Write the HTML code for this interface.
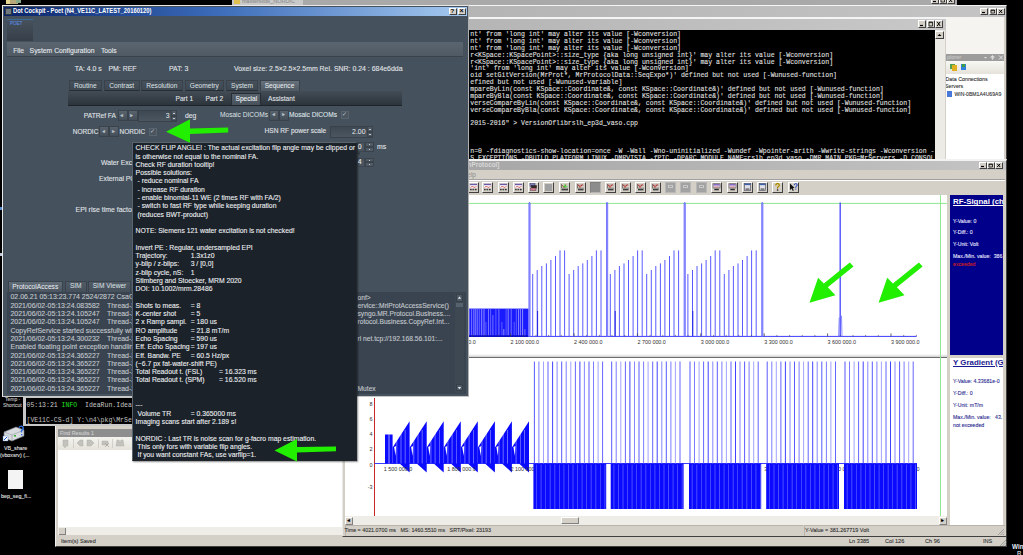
<!DOCTYPE html><html><head><meta charset="utf-8"><style>
*{box-sizing:border-box}
.t{-webkit-text-stroke:0.1px currentColor}
html,body{margin:0;padding:0}
body{width:1023px;height:555px;background:#000;position:relative;overflow:hidden;font-family:"Liberation Sans",sans-serif}
div{position:absolute;white-space:pre}
svg{position:absolute}
</style></head><body><div style="left:6px;top:0px;width:4px;height:4px;background:#e8d890"></div>
<div style="left:10px;top:0px;width:8px;height:4px;background:#b8a878"></div>
<div style="left:16px;top:0px;width:5px;height:3px;background:#88a888"></div>
<div style="left:232px;top:0px;width:725px;height:5px;background:#a9a9a9"></div>
<div style="left:232px;top:0px;width:71px;height:5px;background:#c9c9c9"></div>
<div style="left:234px;top:0px;width:6px;height:4px;background:#e0c050"></div>
<div class="t" style="left:242px;top:-1.80px;font-size:5.5px;line-height:6.60px;color:#909090;font-weight:400;">masterslide_NORDIC</div>
<div style="left:931px;top:-3px;width:8px;height:7px;background:#d4d0c8;border-right:1px solid #404040;border-bottom:1px solid #404040;border-top:1px solid #fff;border-left:1px solid #fff"></div>
<svg style="left:931px;top:-3px" width="8" height="7" viewBox="0 0 8 7"><path d="M2 4.5 L5 4.5" fill="none" stroke="#000" stroke-width="1.2"/></svg>
<div style="left:939px;top:-3px;width:8px;height:7px;background:#d4d0c8;border-right:1px solid #404040;border-bottom:1px solid #404040;border-top:1px solid #fff;border-left:1px solid #fff"></div>
<svg style="left:939px;top:-3px" width="8" height="7" viewBox="0 0 8 7"><path d="M2 2 L5.5 2 L5.5 5 L2 5 Z M2 2.6 L5.5 2.6" fill="none" stroke="#000" stroke-width="0.7"/></svg>
<div style="left:947px;top:-3px;width:8px;height:7px;background:#d4d0c8;border-right:1px solid #404040;border-bottom:1px solid #404040;border-top:1px solid #fff;border-left:1px solid #fff"></div>
<svg style="left:947px;top:-3px" width="8" height="7" viewBox="0 0 8 7"><path d="M2.2 1.8 L5.2 5 M5.2 1.8 L2.2 5" fill="none" stroke="#000" stroke-width="1.0"/></svg>
<div style="left:55px;top:4.5px;width:952px;height:542.5px;background:#d4d0c8;border-top:1.5px solid #f4f4f4;border-left:1px solid #f0f0f0;border-right:1px solid #404040;border-bottom:1px solid #404040"></div>
<div style="left:56px;top:6px;width:950px;height:10.5px;background:linear-gradient(90deg,#a8a8a8,#c4c4c4)"></div>
<div style="left:980px;top:8px;width:8px;height:7px;background:#d4d0c8;border-right:1px solid #404040;border-bottom:1px solid #404040;border-top:1px solid #fff;border-left:1px solid #fff"></div>
<svg style="left:980px;top:8px" width="8" height="7" viewBox="0 0 8 7"><path d="M2 4.5 L5 4.5" fill="none" stroke="#000" stroke-width="1.2"/></svg>
<div style="left:989px;top:8px;width:8px;height:7px;background:#d4d0c8;border-right:1px solid #404040;border-bottom:1px solid #404040;border-top:1px solid #fff;border-left:1px solid #fff"></div>
<svg style="left:989px;top:8px" width="8" height="7" viewBox="0 0 8 7"><path d="M2 2 L5.5 2 L5.5 5 L2 5 Z M2 2.6 L5.5 2.6" fill="none" stroke="#000" stroke-width="0.7"/></svg>
<div style="left:997px;top:8px;width:8px;height:7px;background:#d4d0c8;border-right:1px solid #404040;border-bottom:1px solid #404040;border-top:1px solid #fff;border-left:1px solid #fff"></div>
<svg style="left:997px;top:8px" width="8" height="7" viewBox="0 0 8 7"><path d="M2.2 1.8 L5.2 5 M5.2 1.8 L2.2 5" fill="none" stroke="#000" stroke-width="1.0"/></svg>
<div style="left:946px;top:17px;width:58px;height:37px;background:#f5f4f1"></div>
<div style="left:945px;top:17px;width:1px;height:150px;background:#808080"></div>
<div style="left:946px;top:54px;width:58px;height:7px;background:#9c9c9c"></div>
<div class="t" style="left:947px;top:54.20px;font-size:5.5px;line-height:6.60px;color:#c8c8c8;font-weight:400;">plorer</div>
<svg style="left:980px;top:54px" width="26" height="7" viewBox="0 0 26 7"><path d="M4 3 L7 3 L5.5 4.6 Z" fill="#e8e8e8"/><path d="M12.5 1 L12.5 6 M11 2.5 L14 2.5 L14 4 L11 4 Z" stroke="#e8e8e8" stroke-width="0.7" fill="none"/><path d="M19 1.5 L23 5.5 M23 1.5 L19 5.5" stroke="#e8e8e8" stroke-width="0.9"/></svg>
<div style="left:946px;top:61px;width:58px;height:13px;background:linear-gradient(#f8f8f4,#e4e2da)"></div>
<div style="left:950px;top:64px;width:5px;height:5px;background:#50a050"></div>
<div style="left:952px;top:65px;width:5px;height:6px;background:#e0b020"></div>
<div style="left:961px;top:64px;width:5px;height:6px;background:#3080e0"></div>
<div style="left:962px;top:64px;width:3px;height:3px;background:#40a040"></div>
<div style="left:946px;top:74px;width:58px;height:90px;background:#fff"></div>
<div class="t" style="left:945.5px;top:75.52px;font-size:5.3px;line-height:6.36px;color:#303030;font-weight:400;">Data Connections</div>
<div class="t" style="left:945px;top:83.42px;font-size:5.3px;line-height:6.36px;color:#303030;font-weight:400;">Servers</div>
<div style="left:947px;top:91px;width:5px;height:6px;background:#4878d8"></div>
<div class="t" style="left:954.5px;top:91.14px;font-size:5.1px;line-height:6.12px;color:#303030;font-weight:400;">WIN-0BM1A4U69A9</div>
<div style="left:440px;top:16.5px;width:506px;height:150px;background:#d4d0c8;border-top:2px solid #f4f4f4"></div>
<div style="left:440px;top:18.5px;width:506px;height:11px;background:linear-gradient(90deg,#b4b4b4,#c8c8c8)"></div>
<div style="left:918px;top:20px;width:8px;height:8px;background:#d4d0c8;border-right:1px solid #404040;border-bottom:1px solid #404040;border-top:1px solid #fff;border-left:1px solid #fff"></div>
<svg style="left:918px;top:20px" width="8" height="8" viewBox="0 0 8 8"><path d="M2 5.5 L5 5.5" fill="none" stroke="#000" stroke-width="1.2"/></svg>
<div style="left:927px;top:20px;width:8px;height:8px;background:#d4d0c8;border-right:1px solid #404040;border-bottom:1px solid #404040;border-top:1px solid #fff;border-left:1px solid #fff"></div>
<svg style="left:927px;top:20px" width="8" height="8" viewBox="0 0 8 8"><path d="M2 2 L5.5 2 L5.5 6 L2 6 Z M2 2.6 L5.5 2.6" fill="none" stroke="#000" stroke-width="0.7"/></svg>
<div style="left:935px;top:20px;width:8px;height:8px;background:#d4d0c8;border-right:1px solid #404040;border-bottom:1px solid #404040;border-top:1px solid #fff;border-left:1px solid #fff"></div>
<svg style="left:935px;top:20px" width="8" height="8" viewBox="0 0 8 8"><path d="M2.2 1.8 L5.2 6 M5.2 1.8 L2.2 6" fill="none" stroke="#000" stroke-width="1.0"/></svg>
<div style="left:440px;top:30px;width:495px;height:140px;background:#000"></div>
<div style="left:935px;top:30px;width:10px;height:140px;background:#ecebe6"></div>
<div style="left:935px;top:31px;width:9px;height:8px;background:#d4d0c8;border-right:1px solid #404040;border-bottom:1px solid #404040;border-top:1px solid #fff;border-left:1px solid #fff"></div>
<svg style="left:935px;top:31px" width="9" height="8" viewBox="0 0 9 8"><path d="M2.5 5 L4.5 3 L6.5 5 Z" fill="#000"/></svg>
<div style="left:470.3px;top:31.10px;font-size:6.5px;line-height:7.80px;color:#dcdcdc;font-weight:400;font-family:'Liberation Mono';-webkit-text-stroke:0.15px #dcdcdc;">nt' from 'long int' may alter its value [-Wconversion]</div>
<div style="left:470.3px;top:37.97px;font-size:6.5px;line-height:7.80px;color:#dcdcdc;font-weight:400;font-family:'Liberation Mono';-webkit-text-stroke:0.15px #dcdcdc;">nt' from 'long int' may alter its value [-Wconversion]</div>
<div style="left:470.3px;top:44.83px;font-size:6.5px;line-height:7.80px;color:#dcdcdc;font-weight:400;font-family:'Liberation Mono';-webkit-text-stroke:0.15px #dcdcdc;">nt' from 'long int' may alter its value [-Wconversion]</div>
<div style="left:470.3px;top:51.70px;font-size:6.5px;line-height:7.80px;color:#dcdcdc;font-weight:400;font-family:'Liberation Mono';-webkit-text-stroke:0.15px #dcdcdc;">r&lt;KSpace::KSpacePoint&gt;::size_type {aka long unsigned int}' may alter its value [-Wconversion]</div>
<div style="left:470.3px;top:58.57px;font-size:6.5px;line-height:7.80px;color:#dcdcdc;font-weight:400;font-family:'Liberation Mono';-webkit-text-stroke:0.15px #dcdcdc;">r&lt;KSpace::KSpacePoint&gt;::size_type {aka long unsigned int}' may alter its value [-Wconversion]</div>
<div style="left:470.3px;top:65.44px;font-size:6.5px;line-height:7.80px;color:#dcdcdc;font-weight:400;font-family:'Liberation Mono';-webkit-text-stroke:0.15px #dcdcdc;">'int' from 'long int' may alter its value [-Wconversion]</div>
<div style="left:470.3px;top:72.30px;font-size:6.5px;line-height:7.80px;color:#dcdcdc;font-weight:400;font-family:'Liberation Mono';-webkit-text-stroke:0.15px #dcdcdc;">oid setGitVersion(MrProt*, MrProtocolData::SeqExpo*)' defined but not used [-Wunused-function]</div>
<div style="left:470.3px;top:79.17px;font-size:6.5px;line-height:7.80px;color:#dcdcdc;font-weight:400;font-family:'Liberation Mono';-webkit-text-stroke:0.15px #dcdcdc;">efined but not used [-Wunused-variable]</div>
<div style="left:470.3px;top:86.04px;font-size:6.5px;line-height:7.80px;color:#dcdcdc;font-weight:400;font-family:'Liberation Mono';-webkit-text-stroke:0.15px #dcdcdc;">mpareByLin(const KSpace::Coordinate&amp;, const KSpace::Coordinate&amp;)' defined but not used [-Wunused-function]</div>
<div style="left:470.3px;top:92.90px;font-size:6.5px;line-height:7.80px;color:#dcdcdc;font-weight:400;font-family:'Liberation Mono';-webkit-text-stroke:0.15px #dcdcdc;">mpareByBla(const KSpace::Coordinate&amp;, const KSpace::Coordinate&amp;)' defined but not used [-Wunused-function]</div>
<div style="left:470.3px;top:99.77px;font-size:6.5px;line-height:7.80px;color:#dcdcdc;font-weight:400;font-family:'Liberation Mono';-webkit-text-stroke:0.15px #dcdcdc;">verseCompareByLin(const KSpace::Coordinate&amp;, const KSpace::Coordinate&amp;)' defined but not used [-Wunused-function]</div>
<div style="left:470.3px;top:106.64px;font-size:6.5px;line-height:7.80px;color:#dcdcdc;font-weight:400;font-family:'Liberation Mono';-webkit-text-stroke:0.15px #dcdcdc;">verseCompareByBla(const KSpace::Coordinate&amp;, const KSpace::Coordinate&amp;)' defined but not used [-Wunused-function]</div>
<div style="left:470.3px;top:120.37px;font-size:6.5px;line-height:7.80px;color:#dcdcdc;font-weight:400;font-family:'Liberation Mono';-webkit-text-stroke:0.15px #dcdcdc;">2015-2016" &gt; VersionOflibrslh_ep3d_vaso.cpp</div>
<div style="left:470.3px;top:147.84px;font-size:6.5px;line-height:7.80px;color:#dcdcdc;font-weight:400;font-family:'Liberation Mono';-webkit-text-stroke:0.15px #dcdcdc;">n=0 -fdiagnostics-show-location=once -W -Wall -Wno-uninitialized -Wundef -Wpointer-arith -Wwrite-strings -Wconversion -</div>
<div style="left:470.3px;top:154.71px;font-size:6.5px;line-height:7.80px;color:#dcdcdc;font-weight:400;font-family:'Liberation Mono';-webkit-text-stroke:0.15px #dcdcdc;">S_EXCEPTIONS -DBUILD_PLATFORM_LINUX -DMRVISTA -fPIC -DPARC_MODULE_NAME=rslh_ep3d_vaso -DMR_MAIN_PKG=MrServers -D CONSOL</div>
<div style="left:23px;top:397px;width:320px;height:29px;background:#c8c8c8"></div>
<div style="left:26px;top:398px;width:317px;height:26px;background:#000"></div>
<div style="left:26.5px;top:401.6px;font-family:'Liberation Mono';font-size:6.5px;line-height:7.8px;color:#c8c8c8">05:13:21 <span style="color:#20e020">INFO</span>  IdeaRun.IdeaRunner</div>
<div style="left:26.5px;top:416.5px;font-family:'Liberation Mono';font-size:6.5px;line-height:7.8px;color:#c0c0c0">[VE11C-CS-d] Y:\n4\pkg\MrServers</div>
<div class="t" style="left:5px;top:395.50px;font-size:5px;line-height:6.00px;color:#c0c0c0;font-weight:400;">Temp -</div>
<div class="t" style="left:3px;top:402.00px;font-size:5px;line-height:6.00px;color:#c0c0c0;font-weight:400;">Shortcut</div>
<svg style="left:0;top:424" width="30" height="20" viewBox="0 0 30 20"><path d="M4 8 L16 3 L24 6 L24 12 L12 17 L4 14 Z" fill="#d8dce0" stroke="#707880" stroke-width="0.6"/><path d="M4 8 L12 11 L24 6" fill="none" stroke="#90989f" stroke-width="0.6"/><path d="M12 11 L12 17" stroke="#90989f" stroke-width="0.6"/><rect x="14" y="11" width="2" height="1.5" fill="#30b030"/><path d="M19 3.5 Q21 1 23 3 Q24 5 21.5 6.5 L21.5 8.5" fill="none" stroke="#3070e0" stroke-width="1.4"/><rect x="21" y="10" width="1.4" height="1.4" fill="#3070e0"/><rect x="3" y="12" width="5" height="5" fill="#fff" stroke="#5080c0" stroke-width="0.4"/><path d="M4 16 L7 13" stroke="#2060d0" stroke-width="1"/></svg>
<div class="t" style="left:4px;top:444.82px;font-size:5.3px;line-height:6.36px;color:#e0e0e0;font-weight:400;">VB_share</div>
<div class="t" style="left:0px;top:451.82px;font-size:5.3px;line-height:6.36px;color:#e0e0e0;font-weight:400;">(vboxsrv) (...</div>
<div style="left:8px;top:470px;width:15px;height:19px;background:#f4f4f4"></div>
<div class="t" style="left:1px;top:492.82px;font-size:5.3px;line-height:6.36px;color:#e0e0e0;font-weight:400;">bep_seg_fi...</div>
<div style="left:1012px;top:542.72px;font-size:6.3px;line-height:7.56px;color:#e8eef8;font-weight:700;">Wind</div>
<div style="left:1017px;top:550.40px;font-size:6px;line-height:7.20px;color:#c0c8d0;font-weight:700;">R</div>
<div style="left:58px;top:429px;width:300px;height:8px;background:#8e8e8e"></div>
<div class="t" style="left:60px;top:429.82px;font-size:5.3px;line-height:6.36px;color:#cfcfcf;font-weight:400;">Find Results 1</div>
<div style="left:58px;top:437px;width:300px;height:13px;background:linear-gradient(#f4f3ee,#e4e2da)"></div>
<svg style="left:58px;top:437px" width="80" height="13" viewBox="0 0 80 13"><g fill="#c4c2bc" stroke="#aaa8a2" stroke-width="0.4"><path d="M5 3 L10 3 L10 9 L8 9 L7 11 L6 9 L5 9 Z"/><path d="M19 6 L22 3 L25 3 L25 9 L22 9 Z"/><path d="M29 3 L33 3 L36 6 L33 9 L29 9 Z"/><path d="M44 4 L50 4 L50 8 L44 8 Z"/><path d="M58 9 L59 3 L61 3 L62 6 L63 3 L65 3 L66 9 Z"/></g><path d="M15.5 2 L15.5 11 M40.5 2 L40.5 11 M54.5 2 L54.5 11" stroke="#c8c6c0" stroke-width="0.7"/><path d="M47 6 L51 10 M51 6 L47 10" stroke="#a8a6a0" stroke-width="0.8"/></svg>
<div style="left:58px;top:450px;width:290px;height:77px;background:#fff"></div>
<div style="left:58px;top:527px;width:290px;height:8px;background:#eeede8"></div>
<div style="left:59px;top:528px;width:7px;height:7px;background:#d4d0c8;border-right:1px solid #808080;border-bottom:1px solid #808080"></div>
<div class="t" style="left:61px;top:537.64px;font-size:5.6px;line-height:6.72px;color:#303030;font-weight:400;">Item(s) Saved</div>
<div class="t" style="left:849px;top:537.64px;font-size:5.6px;line-height:6.72px;color:#303030;font-weight:400;">Ln 3385</div>
<div class="t" style="left:885px;top:537.64px;font-size:5.6px;line-height:6.72px;color:#303030;font-weight:400;">Col 126</div>
<div class="t" style="left:925px;top:537.64px;font-size:5.6px;line-height:6.72px;color:#303030;font-weight:400;">Ch 96</div>
<div class="t" style="left:983px;top:537.64px;font-size:5.6px;line-height:6.72px;color:#303030;font-weight:400;">INS</div>
<div style="left:342px;top:159px;width:665px;height:378px;background:#d4d0c8;border-top:2px solid #f2f2f2;border-left:1px solid #e8e8e8;border-right:1px solid #404040;border-bottom:1px solid #404040"></div>
<div style="left:344px;top:161px;width:662px;height:8.5px;background:linear-gradient(90deg,#a0a0a0,#c4c4c4)"></div>
<div style="left:300px;top:161px;width:199.5px;height:8.5px;font-size:6.4px;line-height:8.5px;color:#d8d8d8;font-weight:700;text-align:right">SequenceSimulationProtocol]</div>
<div style="left:979px;top:162px;width:8px;height:7px;background:#d4d0c8;border-right:1px solid #404040;border-bottom:1px solid #404040;border-top:1px solid #fff;border-left:1px solid #fff"></div>
<svg style="left:979px;top:162px" width="8" height="7" viewBox="0 0 8 7"><path d="M2 4.5 L5 4.5" fill="none" stroke="#000" stroke-width="1.2"/></svg>
<div style="left:987px;top:162px;width:8px;height:7px;background:#d4d0c8;border-right:1px solid #404040;border-bottom:1px solid #404040;border-top:1px solid #fff;border-left:1px solid #fff"></div>
<svg style="left:987px;top:162px" width="8" height="7" viewBox="0 0 8 7"><path d="M2 2 L5.5 2 L5.5 5 L2 5 Z M2 2.6 L5.5 2.6" fill="none" stroke="#000" stroke-width="0.7"/></svg>
<div style="left:995px;top:162px;width:8px;height:7px;background:#d4d0c8;border-right:1px solid #404040;border-bottom:1px solid #404040;border-top:1px solid #fff;border-left:1px solid #fff"></div>
<svg style="left:995px;top:162px" width="8" height="7" viewBox="0 0 8 7"><path d="M2.2 1.8 L5.2 5 M5.2 1.8 L2.2 5" fill="none" stroke="#000" stroke-width="1.0"/></svg>
<div style="left:300px;top:170px;width:176px;height:9px;font-size:6.5px;line-height:9px;color:#8a8a8a;text-align:right">File  Edit  View  Help</div>
<div style="left:344px;top:179px;width:661px;height:1px;background:#a0a0a0"></div>
<div style="left:344px;top:180px;width:661px;height:1px;background:#fff"></div>
<div style="left:467.7px;top:182px;width:11px;height:11px;background:#d4d0c8;border-right:1px solid #404040;border-bottom:1px solid #404040;border-top:1px solid #fff;border-left:1px solid #fff"></div>
<svg style="left:467.7px;top:182px" width="11" height="11" viewBox="0 0 11 11"><rect x="2" y="1.8" width="7" height="4.4" fill="#f4f0f4"/><rect x="2" y="1.8" width="7" height="1.3" fill="#6a5aa8"/><path d="M2.5 5.5 Q4 3.4 5.5 5 T8.5 4" fill="none" stroke="#d04040" stroke-width="0.7"/><rect x="2.2" y="6.8" width="1.4" height="1.5" fill="#202020"/><rect x="4.4" y="6.8" width="1.6" height="1.5" fill="#404040"/><rect x="6.8" y="6.8" width="1.8" height="1.5" fill="#303030"/></svg>
<div style="left:482.3px;top:182px;width:11px;height:11px;background:#d4d0c8;border-right:1px solid #404040;border-bottom:1px solid #404040;border-top:1px solid #fff;border-left:1px solid #fff"></div>
<svg style="left:482.3px;top:182px" width="11" height="11" viewBox="0 0 11 11"><rect x="2" y="1.8" width="7" height="4.4" fill="#f4f0f4"/><rect x="2" y="1.8" width="7" height="1.3" fill="#6a5aa8"/><path d="M2.5 5.5 Q4 3.4 5.5 5 T8.5 4" fill="none" stroke="#d04040" stroke-width="0.7"/><rect x="2.2" y="6.8" width="1.4" height="1.5" fill="#202020"/><rect x="4.4" y="6.8" width="1.6" height="1.5" fill="#404040"/><rect x="6.8" y="6.8" width="1.8" height="1.5" fill="#303030"/></svg>
<div style="left:497.5px;top:182px;width:11px;height:11px;background:#d4d0c8;border-right:1px solid #404040;border-bottom:1px solid #404040;border-top:1px solid #fff;border-left:1px solid #fff"></div>
<svg style="left:497.5px;top:182px" width="11" height="11" viewBox="0 0 11 11"><rect x="2" y="1.8" width="7" height="4.4" fill="#f4f0f4"/><rect x="2" y="1.8" width="7" height="1.3" fill="#6a5aa8"/><path d="M2.5 5.5 Q4 3.4 5.5 5 T8.5 4" fill="none" stroke="#d04040" stroke-width="0.7"/><rect x="2.2" y="6.8" width="1.4" height="1.5" fill="#202020"/><rect x="4.4" y="6.8" width="1.6" height="1.5" fill="#404040"/><rect x="6.8" y="6.8" width="1.8" height="1.5" fill="#303030"/></svg>
<div style="left:512.8px;top:182px;width:11px;height:11px;background:#d4d0c8;border-right:1px solid #404040;border-bottom:1px solid #404040;border-top:1px solid #fff;border-left:1px solid #fff"></div>
<svg style="left:512.8px;top:182px" width="11" height="11" viewBox="0 0 11 11"><rect x="2" y="1.8" width="7" height="4.4" fill="#f4f0f4"/><rect x="2" y="1.8" width="7" height="1.3" fill="#6a5aa8"/><path d="M2.5 5.5 Q4 3.4 5.5 5 T8.5 4" fill="none" stroke="#d04040" stroke-width="0.7"/><rect x="2.2" y="6.8" width="1.4" height="1.5" fill="#202020"/><rect x="4.4" y="6.8" width="1.6" height="1.5" fill="#404040"/><rect x="6.8" y="6.8" width="1.8" height="1.5" fill="#303030"/></svg>
<div style="left:528.3px;top:182px;width:11px;height:11px;background:#d4d0c8;border-right:1px solid #404040;border-bottom:1px solid #404040;border-top:1px solid #fff;border-left:1px solid #fff"></div>
<svg style="left:528.3px;top:182px" width="11" height="11" viewBox="0 0 11 11"><rect x="2" y="1.5" width="5" height="3" fill="#8080c0" stroke="#303060" stroke-width="0.5"/><rect x="3.5" y="3.5" width="5" height="2.6" fill="#302820" stroke="#202020" stroke-width="0.5"/><rect x="2.5" y="6" width="5.5" height="2.5" fill="#d08090" stroke="#503040" stroke-width="0.5"/></svg>
<div style="left:543.3px;top:182px;width:11px;height:11px;background:#d4d0c8;border-right:1px solid #404040;border-bottom:1px solid #404040;border-top:1px solid #fff;border-left:1px solid #fff"></div>
<div style="left:545.3px;top:184px;width:7px;height:7px;background:#a0a0a0"></div>
<div style="left:559.3px;top:182px;width:11px;height:11px;background:#d4d0c8;border-right:1px solid #404040;border-bottom:1px solid #404040;border-top:1px solid #fff;border-left:1px solid #fff"></div>
<svg style="left:559.3px;top:182px" width="11" height="11" viewBox="0 0 11 11"><path d="M2.5 2 L2.5 6.2 L9 6.2" fill="none" stroke="#202020" stroke-width="0.5"/><path d="M3 3 L5 5.5 L7 2.5" fill="none" stroke="#c02020" stroke-width="0.8"/><path d="M3.5 4.3 L8.5 4.3 M6 2 L6 6" stroke="#20e020" stroke-width="0.7"/><rect x="2.5" y="7" width="6.5" height="1.4" fill="#404040"/></svg>
<div style="left:574.5px;top:182px;width:11px;height:11px;background:#d4d0c8;border-right:1px solid #404040;border-bottom:1px solid #404040;border-top:1px solid #fff;border-left:1px solid #fff"></div>
<svg style="left:574.5px;top:182px" width="11" height="11" viewBox="0 0 11 11"><path d="M2.5 2 L2.5 6.2 L9 6.2" fill="none" stroke="#202020" stroke-width="0.5"/><path d="M3 2.5 L5 5.5 L7.5 2.2" fill="none" stroke="#c02020" stroke-width="0.8"/><path d="M3 3.2 L8.5 3.2" stroke="#902020" stroke-width="0.5"/><rect x="3" y="7" width="5.5" height="1.4" fill="#404040"/></svg>
<div style="left:589.8px;top:182px;width:11px;height:11px;background:#8c8c8c;border:1px solid #b4b4b4;border-top-color:#808080;border-left-color:#808080"></div>
<div style="left:605.0px;top:182px;width:11px;height:11px;background:#d4d0c8;border-right:1px solid #404040;border-bottom:1px solid #404040;border-top:1px solid #fff;border-left:1px solid #fff"></div>
<svg style="left:605.0px;top:182px" width="11" height="11" viewBox="0 0 11 11"><path d="M2.5 2 L2.5 6.2 L9 6.2" fill="none" stroke="#202020" stroke-width="0.5"/><path d="M3 2.5 L5 5.5 L7.5 2.2" fill="none" stroke="#c02020" stroke-width="0.8"/><path d="M3 3.2 L8.5 3.2" stroke="#902020" stroke-width="0.5"/><rect x="3" y="7" width="5.5" height="1.4" fill="#404040"/></svg>
<div style="left:619.8px;top:182px;width:11px;height:11px;background:#d4d0c8;border-right:1px solid #404040;border-bottom:1px solid #404040;border-top:1px solid #fff;border-left:1px solid #fff"></div>
<svg style="left:619.8px;top:182px" width="11" height="11" viewBox="0 0 11 11"><path d="M2.5 2 L2.5 6.2 L9 6.2" fill="none" stroke="#202020" stroke-width="0.5"/><path d="M3 2.5 L5 5.5 L7.5 2.2" fill="none" stroke="#c02020" stroke-width="0.8"/><path d="M3 3.2 L8.5 3.2" stroke="#902020" stroke-width="0.5"/><rect x="3" y="7" width="5.5" height="1.4" fill="#404040"/></svg>
<div style="left:635.1px;top:182px;width:11px;height:11px;background:#d4d0c8;border-right:1px solid #404040;border-bottom:1px solid #404040;border-top:1px solid #fff;border-left:1px solid #fff"></div>
<svg style="left:635.1px;top:182px" width="11" height="11" viewBox="0 0 11 11"><path d="M2.5 2 L2.5 6.2 L9 6.2" fill="none" stroke="#202020" stroke-width="0.5"/><path d="M3 2.5 L5 5.5 L7.5 2.2" fill="none" stroke="#c02020" stroke-width="0.8"/><path d="M3 3.2 L8.5 3.2" stroke="#902020" stroke-width="0.5"/><rect x="3" y="7" width="5.5" height="1.4" fill="#404040"/></svg>
<div style="left:649.5px;top:182px;width:11px;height:11px;background:#d4d0c8;border-right:1px solid #404040;border-bottom:1px solid #404040;border-top:1px solid #fff;border-left:1px solid #fff"></div>
<svg style="left:649.5px;top:182px" width="11" height="11" viewBox="0 0 11 11"><path d="M2.5 2 L2.5 6.2 L9 6.2" fill="none" stroke="#202020" stroke-width="0.5"/><path d="M3 2.5 L5 5.5 L7.5 2.2" fill="none" stroke="#c02020" stroke-width="0.8"/><path d="M3 3.2 L8.5 3.2" stroke="#902020" stroke-width="0.5"/><rect x="3" y="7" width="5.5" height="1.4" fill="#404040"/></svg>
<div style="left:665.4px;top:182px;width:11px;height:11px;background:#a2a2a2;border:1px solid #b8b8b8"></div>
<div style="left:668.4px;top:185px;width:5px;height:3px;border:0.6px solid #c8c8c8"></div>
<div style="left:680.2px;top:182px;width:11px;height:11px;background:#a2a2a2;border:1px solid #b8b8b8"></div>
<div style="left:683.2px;top:185px;width:5px;height:3px;border:0.6px solid #c8c8c8"></div>
<div style="left:695.7px;top:182px;width:11px;height:11px;background:#a2a2a2;border:1px solid #b8b8b8"></div>
<div style="left:698.7px;top:185px;width:5px;height:3px;border:0.6px solid #c8c8c8"></div>
<div style="left:711.1px;top:182px;width:11px;height:11px;background:#d4d0c8;border-right:1px solid #404040;border-bottom:1px solid #404040;border-top:1px solid #fff;border-left:1px solid #fff"></div>
<svg style="left:711.1px;top:182px" width="11" height="11" viewBox="0 0 11 11"><rect x="2" y="1.8" width="7" height="4.2" fill="#e8e0f0" stroke="#303030" stroke-width="0.5"/><rect x="2.3" y="2.1" width="6.4" height="1.4" fill="#8060c0"/><path d="M3 5 L8 5" stroke="#c04040" stroke-width="0.6"/><rect x="3.3" y="6.8" width="4.5" height="1.5" fill="#303030"/></svg>
<div style="left:726.5px;top:182px;width:11px;height:11px;background:#d4d0c8;border-right:1px solid #404040;border-bottom:1px solid #404040;border-top:1px solid #fff;border-left:1px solid #fff"></div>
<svg style="left:726.5px;top:182px" width="11" height="11" viewBox="0 0 11 11"><rect x="2" y="1.8" width="7" height="4.2" fill="#e8e0f0" stroke="#303030" stroke-width="0.5"/><rect x="2.3" y="2.1" width="6.4" height="1.4" fill="#8060c0"/><path d="M3 5 L8 5" stroke="#c04040" stroke-width="0.6"/><rect x="3.3" y="6.8" width="4.5" height="1.5" fill="#303030"/></svg>
<div style="left:741.5px;top:182px;width:11px;height:11px;background:#d4d0c8;border-right:1px solid #404040;border-bottom:1px solid #404040;border-top:1px solid #fff;border-left:1px solid #fff"></div>
<svg style="left:741.5px;top:182px" width="11" height="11" viewBox="0 0 11 11"><rect x="2.3" y="1.6" width="6.4" height="7" fill="#e0e0e8" stroke="#404050" stroke-width="0.6"/><rect x="2.3" y="1.6" width="6.4" height="1.5" fill="#4060a8"/><rect x="3.5" y="6.5" width="4" height="1.2" fill="#505050"/></svg>
<div style="left:757.0px;top:182px;width:11px;height:11px;background:#d4d0c8;border-right:1px solid #404040;border-bottom:1px solid #404040;border-top:1px solid #fff;border-left:1px solid #fff"></div>
<svg style="left:757.0px;top:182px" width="11" height="11" viewBox="0 0 11 11"><rect x="2.3" y="1.6" width="6.4" height="7" fill="#e0e0e8" stroke="#404050" stroke-width="0.6"/><rect x="2.3" y="1.6" width="6.4" height="1.5" fill="#4060a8"/><rect x="3.5" y="6.5" width="4" height="1.2" fill="#505050"/></svg>
<div style="left:772.1px;top:182px;width:11px;height:11px;background:#d4d0c8;border-right:1px solid #404040;border-bottom:1px solid #404040;border-top:1px solid #fff;border-left:1px solid #fff"></div>
<svg style="left:772.1px;top:182px" width="11" height="11" viewBox="0 0 11 11"><path d="M3.8 3.5 Q3.8 1.5 5.5 1.5 Q7.3 1.5 7.3 3.3 Q7.3 4.6 5.6 5.2 L5.6 6.5" fill="none" stroke="#e0b000" stroke-width="1.3"/><path d="M3.8 3.5 Q3.8 1.5 5.5 1.5 Q7.3 1.5 7.3 3.3 Q7.3 4.6 5.6 5.2 L5.6 6.5" fill="none" stroke="#202020" stroke-width="0.35"/><rect x="4.9" y="7.3" width="1.4" height="1.4" fill="#202020"/></svg>
<div style="left:787.5px;top:182px;width:11px;height:11px;background:#d4d0c8;border-right:1px solid #404040;border-bottom:1px solid #404040;border-top:1px solid #fff;border-left:1px solid #fff"></div>
<svg style="left:787.5px;top:182px" width="11" height="11" viewBox="0 0 11 11"><path d="M2 1.5 L2 8 L3.6 6.6 L4.8 9 L5.8 8.5 L4.7 6.2 L6.6 6.1 Z" fill="#101010"/><path d="M6.2 3.2 Q6.2 1.6 7.7 1.6 Q9.2 1.6 9.2 3 Q9.2 4.2 7.8 4.6 L7.8 5.8" fill="none" stroke="#2040c0" stroke-width="1"/><rect x="7.3" y="6.6" width="1" height="1" fill="#2040c0"/></svg>
<div style="left:345px;top:195px;width:602px;height:321px;background:#fff"></div>
<div style="left:345px;top:353.5px;width:602px;height:3.8px;background:linear-gradient(#ffffff,#d0d0d0)"></div>
<div style="left:345px;top:357.2px;width:602px;height:1.2px;background:#6c6c6c"></div>
<div style="left:947px;top:195px;width:57px;height:330px;background:#d4d0c8"></div>
<div style="left:950px;top:195px;width:53px;height:160px;background:#00008a"></div>
<div style="left:950px;top:357.5px;width:53px;height:167px;background:#fff"></div>
<div style="left:950px;top:195px;width:53px;height:20px;overflow:hidden"><div style="left:3px;top:2.3px;font-size:7.9px;line-height:9.5px;color:#fff;font-weight:700;text-decoration:underline">RF-Signal (ch</div></div>
<div class="t" style="left:953px;top:217.58px;font-size:5.2px;line-height:6.24px;color:#e8e8ff;font-weight:400;">Y-Value: 0</div>
<div class="t" style="left:953px;top:229.48px;font-size:5.2px;line-height:6.24px;color:#e8e8ff;font-weight:400;">Y-Diff.: 0</div>
<div class="t" style="left:953px;top:241.48px;font-size:5.2px;line-height:6.24px;color:#e8e8ff;font-weight:400;">Y-Unit: Volt</div>
<div class="t" style="left:953px;top:253.48px;font-size:5.2px;line-height:6.24px;color:#e8e8ff;font-weight:400;">Max./Min. value:  386</div>
<div class="t" style="left:953px;top:261.38px;font-size:5.2px;line-height:6.24px;color:#d02020;font-weight:400;">exceeded</div>
<div style="left:950px;top:357.5px;width:53px;height:20px;overflow:hidden"><div style="left:3px;top:0.6px;font-size:7.9px;line-height:9.5px;color:#1a1a90;font-weight:700;text-decoration:underline">Y Gradient (G</div></div>
<div class="t" style="left:953px;top:377.88px;font-size:5.2px;line-height:6.24px;color:#2a2a90;font-weight:400;">Y-Value: 4.33681e-0</div>
<div class="t" style="left:953px;top:389.88px;font-size:5.2px;line-height:6.24px;color:#2a2a90;font-weight:400;">Y-Diff.: 0</div>
<div class="t" style="left:953px;top:401.88px;font-size:5.2px;line-height:6.24px;color:#2a2a90;font-weight:400;">Y-Unit: mT/m</div>
<div class="t" style="left:953px;top:413.88px;font-size:5.2px;line-height:6.24px;color:#2a2a90;font-weight:400;">Max./Min. value:   43.</div>
<div class="t" style="left:953px;top:421.88px;font-size:5.2px;line-height:6.24px;color:#2a2a90;font-weight:400;">not exceeded</div>
<div style="left:345px;top:516px;width:602px;height:8.5px;background:#eeede8"></div>
<div style="left:344.5px;top:517px;width:8px;height:7.5px;background:#d4d0c8;border-right:1px solid #808080;border-bottom:1px solid #808080;border-top:1px solid #fff;border-left:1px solid #fff"></div>
<div class="t" style="left:346.5px;top:517.10px;font-size:6px;line-height:7.20px;color:#000;font-weight:400;">◂</div>
<div style="left:561px;top:516.8px;width:18px;height:7.7px;background:#d4d0c8;border-right:1px solid #808080;border-bottom:1px solid #808080;border-top:1px solid #fff;border-left:1px solid #fff"></div>
<div style="left:939px;top:517px;width:8px;height:7.5px;background:#d4d0c8;border-right:1px solid #808080;border-bottom:1px solid #808080;border-top:1px solid #fff;border-left:1px solid #fff"></div>
<div class="t" style="left:941px;top:517.10px;font-size:6px;line-height:7.20px;color:#000;font-weight:400;">▸</div>
<div style="left:345px;top:525px;width:458px;height:11px;background:#d4d0c8;border-top:1px solid #b8b4ac;border-left:1px solid #b8b4ac"></div>
<div style="left:803.5px;top:525px;width:201px;height:11px;background:#d4d0c8;border-top:1px solid #b8b4ac;border-left:1px solid #b8b4ac"></div>
<svg style="left:996px;top:527px" width="9" height="9" viewBox="0 0 9 9"><path d="M8 2 L2 8 M8 4.5 L4.5 8 M8 7 L7 8" stroke="#909090" stroke-width="0.8"/></svg>
<svg style="left:998px;top:538px" width="9" height="9" viewBox="0 0 9 9"><path d="M8 2 L2 8 M8 4.5 L4.5 8 M8 7 L7 8" stroke="#909090" stroke-width="0.8"/></svg>
<div class="t" style="left:344.5px;top:527.40px;font-size:5.33px;line-height:6.40px;color:#303030;font-weight:400;">Time = 4021.0700 ms   MS: 1460.5510 ms   SRT/Pixel: 23193</div>
<div class="t" style="left:805px;top:527.33px;font-size:5.45px;line-height:6.54px;color:#303030;font-weight:400;">Y-Value = 381.267719 Volt</div>
<svg style="left:0;top:0" width="1023" height="555" viewBox="0 0 1023 555"><defs><clipPath id="pc"><rect x="345" y="195" width="602" height="321"/></clipPath></defs><g clip-path="url(#pc)"><line x1="345" y1="203.4" x2="947" y2="203.4" stroke="#90e890" stroke-width="1"/><line x1="940.5" y1="195" x2="940.5" y2="516" stroke="#90e890" stroke-width="1"/><line x1="345" y1="336.4" x2="916.5" y2="336.4" stroke="#3c3cff" stroke-width="1"/><rect x="345" y="308.6" width="183.5" height="27.799999999999955" fill="#1a1aff"/><line x1="346.0" y1="322" x2="346.0" y2="335.59999999999997" stroke="#8c8cff" stroke-width="0.8"/><line x1="347.9" y1="315" x2="347.9" y2="335.59999999999997" stroke="#8c8cff" stroke-width="0.6"/><line x1="350.2" y1="308.6" x2="350.2" y2="335.59999999999997" stroke="#8c8cff" stroke-width="1.0"/><line x1="353.2" y1="308.6" x2="353.2" y2="335.59999999999997" stroke="#8c8cff" stroke-width="0.6"/><line x1="355.8" y1="308.6" x2="355.8" y2="335.59999999999997" stroke="#8c8cff" stroke-width="0.8"/><line x1="357.7" y1="308.6" x2="357.7" y2="335.59999999999997" stroke="#8c8cff" stroke-width="1.0"/><line x1="360.7" y1="329" x2="360.7" y2="335.59999999999997" stroke="#8c8cff" stroke-width="0.6"/><line x1="363.7" y1="308.6" x2="363.7" y2="335.59999999999997" stroke="#8c8cff" stroke-width="0.6"/><line x1="366.3" y1="315" x2="366.3" y2="335.59999999999997" stroke="#8c8cff" stroke-width="0.6"/><line x1="369.3" y1="308.6" x2="369.3" y2="335.59999999999997" stroke="#8c8cff" stroke-width="0.6"/><line x1="371.4" y1="308.6" x2="371.4" y2="335.59999999999997" stroke="#8c8cff" stroke-width="1.0"/><line x1="373.7" y1="315" x2="373.7" y2="335.59999999999997" stroke="#8c8cff" stroke-width="1.0"/><line x1="375.6" y1="308.6" x2="375.6" y2="335.59999999999997" stroke="#8c8cff" stroke-width="1.0"/><line x1="377.7" y1="308.6" x2="377.7" y2="335.59999999999997" stroke="#8c8cff" stroke-width="0.8"/><line x1="379.6" y1="308.6" x2="379.6" y2="335.59999999999997" stroke="#8c8cff" stroke-width="1.0"/><line x1="381.7" y1="308.6" x2="381.7" y2="335.59999999999997" stroke="#8c8cff" stroke-width="0.8"/><line x1="384.3" y1="308.6" x2="384.3" y2="335.59999999999997" stroke="#8c8cff" stroke-width="0.8"/><line x1="386.9" y1="308.6" x2="386.9" y2="335.59999999999997" stroke="#8c8cff" stroke-width="0.8"/><line x1="389.0" y1="315" x2="389.0" y2="335.59999999999997" stroke="#8c8cff" stroke-width="1.0"/><line x1="392.0" y1="308.6" x2="392.0" y2="335.59999999999997" stroke="#8c8cff" stroke-width="0.8"/><line x1="394.3" y1="308.6" x2="394.3" y2="335.59999999999997" stroke="#8c8cff" stroke-width="1.0"/><line x1="397.3" y1="308.6" x2="397.3" y2="335.59999999999997" stroke="#8c8cff" stroke-width="0.6"/><line x1="399.9" y1="315" x2="399.9" y2="335.59999999999997" stroke="#8c8cff" stroke-width="0.6"/><line x1="402.5" y1="308.6" x2="402.5" y2="335.59999999999997" stroke="#8c8cff" stroke-width="0.8"/><line x1="404.4" y1="308.6" x2="404.4" y2="335.59999999999997" stroke="#8c8cff" stroke-width="1.0"/><line x1="406.7" y1="308.6" x2="406.7" y2="335.59999999999997" stroke="#8c8cff" stroke-width="0.8"/><line x1="409.7" y1="308.6" x2="409.7" y2="335.59999999999997" stroke="#8c8cff" stroke-width="0.8"/><line x1="412.3" y1="322" x2="412.3" y2="335.59999999999997" stroke="#8c8cff" stroke-width="0.6"/><line x1="414.9" y1="308.6" x2="414.9" y2="335.59999999999997" stroke="#8c8cff" stroke-width="1.0"/><line x1="416.8" y1="308.6" x2="416.8" y2="335.59999999999997" stroke="#8c8cff" stroke-width="1.0"/><line x1="419.8" y1="322" x2="419.8" y2="335.59999999999997" stroke="#8c8cff" stroke-width="1.0"/><line x1="422.4" y1="308.6" x2="422.4" y2="335.59999999999997" stroke="#8c8cff" stroke-width="1.0"/><line x1="425.0" y1="308.6" x2="425.0" y2="335.59999999999997" stroke="#8c8cff" stroke-width="0.8"/><line x1="426.9" y1="308.6" x2="426.9" y2="335.59999999999997" stroke="#8c8cff" stroke-width="0.8"/><line x1="429.2" y1="308.6" x2="429.2" y2="335.59999999999997" stroke="#8c8cff" stroke-width="0.6"/><line x1="431.8" y1="322" x2="431.8" y2="335.59999999999997" stroke="#8c8cff" stroke-width="0.8"/><line x1="433.7" y1="308.6" x2="433.7" y2="335.59999999999997" stroke="#8c8cff" stroke-width="0.6"/><line x1="436.7" y1="322" x2="436.7" y2="335.59999999999997" stroke="#8c8cff" stroke-width="0.8"/><line x1="439.7" y1="308.6" x2="439.7" y2="335.59999999999997" stroke="#8c8cff" stroke-width="0.8"/><line x1="442.0" y1="315" x2="442.0" y2="335.59999999999997" stroke="#8c8cff" stroke-width="1.0"/><line x1="444.1" y1="308.6" x2="444.1" y2="335.59999999999997" stroke="#8c8cff" stroke-width="0.6"/><line x1="446.2" y1="308.6" x2="446.2" y2="335.59999999999997" stroke="#8c8cff" stroke-width="1.0"/><line x1="448.8" y1="308.6" x2="448.8" y2="335.59999999999997" stroke="#8c8cff" stroke-width="1.0"/><line x1="451.1" y1="308.6" x2="451.1" y2="335.59999999999997" stroke="#8c8cff" stroke-width="0.6"/><line x1="454.1" y1="308.6" x2="454.1" y2="335.59999999999997" stroke="#8c8cff" stroke-width="0.8"/><line x1="456.4" y1="308.6" x2="456.4" y2="335.59999999999997" stroke="#8c8cff" stroke-width="0.6"/><line x1="459.4" y1="308.6" x2="459.4" y2="335.59999999999997" stroke="#8c8cff" stroke-width="1.0"/><line x1="461.3" y1="329" x2="461.3" y2="335.59999999999997" stroke="#8c8cff" stroke-width="0.8"/><line x1="464.3" y1="308.6" x2="464.3" y2="335.59999999999997" stroke="#8c8cff" stroke-width="0.8"/><line x1="466.9" y1="308.6" x2="466.9" y2="335.59999999999997" stroke="#8c8cff" stroke-width="0.6"/><line x1="469.5" y1="308.6" x2="469.5" y2="335.59999999999997" stroke="#8c8cff" stroke-width="0.6"/><line x1="471.6" y1="308.6" x2="471.6" y2="335.59999999999997" stroke="#8c8cff" stroke-width="0.8"/><line x1="473.9" y1="308.6" x2="473.9" y2="335.59999999999997" stroke="#8c8cff" stroke-width="1.0"/><line x1="475.8" y1="308.6" x2="475.8" y2="335.59999999999997" stroke="#8c8cff" stroke-width="1.0"/><line x1="477.7" y1="308.6" x2="477.7" y2="335.59999999999997" stroke="#8c8cff" stroke-width="0.8"/><line x1="479.6" y1="308.6" x2="479.6" y2="335.59999999999997" stroke="#8c8cff" stroke-width="0.6"/><line x1="481.7" y1="308.6" x2="481.7" y2="335.59999999999997" stroke="#8c8cff" stroke-width="1.0"/><line x1="484.0" y1="308.6" x2="484.0" y2="335.59999999999997" stroke="#8c8cff" stroke-width="1.0"/><line x1="485.9" y1="322" x2="485.9" y2="335.59999999999997" stroke="#8c8cff" stroke-width="0.6"/><line x1="488.5" y1="308.6" x2="488.5" y2="335.59999999999997" stroke="#8c8cff" stroke-width="0.8"/><line x1="490.6" y1="308.6" x2="490.6" y2="335.59999999999997" stroke="#8c8cff" stroke-width="0.6"/><line x1="492.9" y1="315" x2="492.9" y2="335.59999999999997" stroke="#8c8cff" stroke-width="0.8"/><line x1="495.9" y1="308.6" x2="495.9" y2="335.59999999999997" stroke="#8c8cff" stroke-width="0.6"/><line x1="498.9" y1="308.6" x2="498.9" y2="335.59999999999997" stroke="#8c8cff" stroke-width="0.8"/><line x1="501.9" y1="322" x2="501.9" y2="335.59999999999997" stroke="#8c8cff" stroke-width="0.6"/><line x1="503.8" y1="329" x2="503.8" y2="335.59999999999997" stroke="#8c8cff" stroke-width="1.0"/><line x1="506.1" y1="308.6" x2="506.1" y2="335.59999999999997" stroke="#8c8cff" stroke-width="0.6"/><line x1="508.2" y1="308.6" x2="508.2" y2="335.59999999999997" stroke="#8c8cff" stroke-width="1.0"/><line x1="511.2" y1="308.6" x2="511.2" y2="335.59999999999997" stroke="#8c8cff" stroke-width="0.8"/><line x1="514.2" y1="322" x2="514.2" y2="335.59999999999997" stroke="#8c8cff" stroke-width="0.6"/><line x1="516.3" y1="308.6" x2="516.3" y2="335.59999999999997" stroke="#8c8cff" stroke-width="0.6"/><line x1="518.6" y1="308.6" x2="518.6" y2="335.59999999999997" stroke="#8c8cff" stroke-width="1.0"/><line x1="520.5" y1="308.6" x2="520.5" y2="335.59999999999997" stroke="#8c8cff" stroke-width="0.8"/><line x1="522.6" y1="308.6" x2="522.6" y2="335.59999999999997" stroke="#8c8cff" stroke-width="1.0"/><line x1="524.9" y1="329" x2="524.9" y2="335.59999999999997" stroke="#8c8cff" stroke-width="0.8"/><line x1="345" y1="336.09999999999997" x2="528" y2="336.09999999999997" stroke="#0000b0" stroke-width="1.2"/><rect x="528.9" y="202.5" width="1.2" height="133.9" rx="0.5" fill="#b0b0ff" stroke="#5050ff" stroke-width="0.7"/><line x1="532.7" y1="274" x2="532.7" y2="336.4" stroke="#5a5aff" stroke-width="1"/><line x1="537.2" y1="270" x2="537.2" y2="336.4" stroke="#5a5aff" stroke-width="1"/><line x1="541.8" y1="266" x2="541.8" y2="336.4" stroke="#5a5aff" stroke-width="1"/><line x1="546.4" y1="263.4" x2="546.4" y2="336.4" stroke="#5a5aff" stroke-width="1"/><line x1="550.9" y1="260" x2="550.9" y2="336.4" stroke="#5a5aff" stroke-width="1"/><line x1="555.5" y1="256" x2="555.5" y2="336.4" stroke="#5a5aff" stroke-width="1"/><line x1="560.0" y1="250.4" x2="560.0" y2="336.4" stroke="#5a5aff" stroke-width="1"/><line x1="564.6" y1="250.4" x2="564.6" y2="336.4" stroke="#5a5aff" stroke-width="1"/><line x1="569.1" y1="274" x2="569.1" y2="336.4" stroke="#5a5aff" stroke-width="1"/><line x1="573.7" y1="270" x2="573.7" y2="336.4" stroke="#5a5aff" stroke-width="1"/><line x1="578.2" y1="266" x2="578.2" y2="336.4" stroke="#5a5aff" stroke-width="1"/><line x1="582.8" y1="263.4" x2="582.8" y2="336.4" stroke="#5a5aff" stroke-width="1"/><line x1="587.3" y1="260" x2="587.3" y2="336.4" stroke="#5a5aff" stroke-width="1"/><line x1="591.9" y1="256" x2="591.9" y2="336.4" stroke="#5a5aff" stroke-width="1"/><line x1="596.4" y1="250.4" x2="596.4" y2="336.4" stroke="#5a5aff" stroke-width="1"/><line x1="601.0" y1="250.4" x2="601.0" y2="336.4" stroke="#5a5aff" stroke-width="1"/><line x1="537.6" y1="311" x2="537.6" y2="336.4" stroke="#2020e0" stroke-width="1"/><rect x="606.5" y="202.5" width="1.2" height="133.9" rx="0.5" fill="#b0b0ff" stroke="#5050ff" stroke-width="0.7"/><line x1="610.3" y1="274" x2="610.3" y2="336.4" stroke="#5a5aff" stroke-width="1"/><line x1="614.9" y1="270" x2="614.9" y2="336.4" stroke="#5a5aff" stroke-width="1"/><line x1="619.4" y1="266" x2="619.4" y2="336.4" stroke="#5a5aff" stroke-width="1"/><line x1="624.0" y1="263.4" x2="624.0" y2="336.4" stroke="#5a5aff" stroke-width="1"/><line x1="628.5" y1="260" x2="628.5" y2="336.4" stroke="#5a5aff" stroke-width="1"/><line x1="633.1" y1="256" x2="633.1" y2="336.4" stroke="#5a5aff" stroke-width="1"/><line x1="637.6" y1="250.4" x2="637.6" y2="336.4" stroke="#5a5aff" stroke-width="1"/><line x1="642.2" y1="250.4" x2="642.2" y2="336.4" stroke="#5a5aff" stroke-width="1"/><line x1="646.7" y1="274" x2="646.7" y2="336.4" stroke="#5a5aff" stroke-width="1"/><line x1="651.3" y1="270" x2="651.3" y2="336.4" stroke="#5a5aff" stroke-width="1"/><line x1="655.8" y1="266" x2="655.8" y2="336.4" stroke="#5a5aff" stroke-width="1"/><line x1="660.4" y1="263.4" x2="660.4" y2="336.4" stroke="#5a5aff" stroke-width="1"/><line x1="664.9" y1="260" x2="664.9" y2="336.4" stroke="#5a5aff" stroke-width="1"/><line x1="669.5" y1="256" x2="669.5" y2="336.4" stroke="#5a5aff" stroke-width="1"/><line x1="674.0" y1="250.4" x2="674.0" y2="336.4" stroke="#5a5aff" stroke-width="1"/><line x1="678.6" y1="250.4" x2="678.6" y2="336.4" stroke="#5a5aff" stroke-width="1"/><line x1="615.2" y1="311" x2="615.2" y2="336.4" stroke="#2020e0" stroke-width="1"/><rect x="684.1" y="202.5" width="1.2" height="133.9" rx="0.5" fill="#b0b0ff" stroke="#5050ff" stroke-width="0.7"/><line x1="687.9" y1="274" x2="687.9" y2="336.4" stroke="#5a5aff" stroke-width="1"/><line x1="692.5" y1="270" x2="692.5" y2="336.4" stroke="#5a5aff" stroke-width="1"/><line x1="697.0" y1="266" x2="697.0" y2="336.4" stroke="#5a5aff" stroke-width="1"/><line x1="701.6" y1="263.4" x2="701.6" y2="336.4" stroke="#5a5aff" stroke-width="1"/><line x1="706.1" y1="260" x2="706.1" y2="336.4" stroke="#5a5aff" stroke-width="1"/><line x1="710.7" y1="256" x2="710.7" y2="336.4" stroke="#5a5aff" stroke-width="1"/><line x1="715.2" y1="250.4" x2="715.2" y2="336.4" stroke="#5a5aff" stroke-width="1"/><line x1="719.8" y1="250.4" x2="719.8" y2="336.4" stroke="#5a5aff" stroke-width="1"/><line x1="724.3" y1="274" x2="724.3" y2="336.4" stroke="#5a5aff" stroke-width="1"/><line x1="728.9" y1="270" x2="728.9" y2="336.4" stroke="#5a5aff" stroke-width="1"/><line x1="733.4" y1="266" x2="733.4" y2="336.4" stroke="#5a5aff" stroke-width="1"/><line x1="738.0" y1="263.4" x2="738.0" y2="336.4" stroke="#5a5aff" stroke-width="1"/><line x1="742.5" y1="260" x2="742.5" y2="336.4" stroke="#5a5aff" stroke-width="1"/><line x1="747.1" y1="256" x2="747.1" y2="336.4" stroke="#5a5aff" stroke-width="1"/><line x1="751.6" y1="250.4" x2="751.6" y2="336.4" stroke="#5a5aff" stroke-width="1"/><line x1="756.2" y1="250.4" x2="756.2" y2="336.4" stroke="#5a5aff" stroke-width="1"/><line x1="692.8" y1="311" x2="692.8" y2="336.4" stroke="#2020e0" stroke-width="1"/><rect x="761.7" y="202.5" width="1.2" height="133.9" rx="0.5" fill="#b0b0ff" stroke="#5050ff" stroke-width="0.7"/><line x1="840.2" y1="202.5" x2="840.2" y2="336.4" stroke="#5050ff" stroke-width="1.4"/><path d="M838.6 336.4 L839.2 318 L841.5 316 L842 336.4" fill="none" stroke="#7070ff" stroke-width="0.8"/><line x1="345.8" y1="334.9" x2="345.8" y2="336.4" stroke="#404040" stroke-width="0.6"/><line x1="358.4" y1="334.9" x2="358.4" y2="336.4" stroke="#404040" stroke-width="0.6"/><line x1="371.1" y1="334.9" x2="371.1" y2="336.4" stroke="#404040" stroke-width="0.6"/><line x1="383.8" y1="333.4" x2="383.8" y2="336.4" stroke="#404040" stroke-width="0.8"/><line x1="396.5" y1="334.9" x2="396.5" y2="336.4" stroke="#404040" stroke-width="0.6"/><line x1="409.2" y1="334.9" x2="409.2" y2="336.4" stroke="#404040" stroke-width="0.6"/><line x1="421.8" y1="334.9" x2="421.8" y2="336.4" stroke="#404040" stroke-width="0.6"/><line x1="434.5" y1="334.9" x2="434.5" y2="336.4" stroke="#404040" stroke-width="0.6"/><line x1="447.2" y1="333.4" x2="447.2" y2="336.4" stroke="#404040" stroke-width="0.8"/><line x1="459.9" y1="334.9" x2="459.9" y2="336.4" stroke="#404040" stroke-width="0.6"/><line x1="472.6" y1="334.9" x2="472.6" y2="336.4" stroke="#404040" stroke-width="0.6"/><line x1="485.2" y1="334.9" x2="485.2" y2="336.4" stroke="#404040" stroke-width="0.6"/><line x1="497.9" y1="334.9" x2="497.9" y2="336.4" stroke="#404040" stroke-width="0.6"/><line x1="510.6" y1="333.4" x2="510.6" y2="336.4" stroke="#404040" stroke-width="0.8"/><line x1="523.3" y1="334.9" x2="523.3" y2="336.4" stroke="#404040" stroke-width="0.6"/><line x1="536.0" y1="334.9" x2="536.0" y2="336.4" stroke="#404040" stroke-width="0.6"/><line x1="548.6" y1="334.9" x2="548.6" y2="336.4" stroke="#404040" stroke-width="0.6"/><line x1="561.3" y1="334.9" x2="561.3" y2="336.4" stroke="#404040" stroke-width="0.6"/><line x1="574.0" y1="333.4" x2="574.0" y2="336.4" stroke="#404040" stroke-width="0.8"/><line x1="586.7" y1="334.9" x2="586.7" y2="336.4" stroke="#404040" stroke-width="0.6"/><line x1="599.4" y1="334.9" x2="599.4" y2="336.4" stroke="#404040" stroke-width="0.6"/><line x1="612.0" y1="334.9" x2="612.0" y2="336.4" stroke="#404040" stroke-width="0.6"/><line x1="624.7" y1="334.9" x2="624.7" y2="336.4" stroke="#404040" stroke-width="0.6"/><line x1="637.4" y1="333.4" x2="637.4" y2="336.4" stroke="#404040" stroke-width="0.8"/><line x1="650.1" y1="334.9" x2="650.1" y2="336.4" stroke="#404040" stroke-width="0.6"/><line x1="662.8" y1="334.9" x2="662.8" y2="336.4" stroke="#404040" stroke-width="0.6"/><line x1="675.4" y1="334.9" x2="675.4" y2="336.4" stroke="#404040" stroke-width="0.6"/><line x1="688.1" y1="334.9" x2="688.1" y2="336.4" stroke="#404040" stroke-width="0.6"/><line x1="700.8" y1="333.4" x2="700.8" y2="336.4" stroke="#404040" stroke-width="0.8"/><line x1="713.5" y1="334.9" x2="713.5" y2="336.4" stroke="#404040" stroke-width="0.6"/><line x1="726.2" y1="334.9" x2="726.2" y2="336.4" stroke="#404040" stroke-width="0.6"/><line x1="738.8" y1="334.9" x2="738.8" y2="336.4" stroke="#404040" stroke-width="0.6"/><line x1="751.5" y1="334.9" x2="751.5" y2="336.4" stroke="#404040" stroke-width="0.6"/><line x1="764.2" y1="333.4" x2="764.2" y2="336.4" stroke="#404040" stroke-width="0.8"/><line x1="776.9" y1="334.9" x2="776.9" y2="336.4" stroke="#404040" stroke-width="0.6"/><line x1="789.6" y1="334.9" x2="789.6" y2="336.4" stroke="#404040" stroke-width="0.6"/><line x1="802.2" y1="334.9" x2="802.2" y2="336.4" stroke="#404040" stroke-width="0.6"/><line x1="814.9" y1="334.9" x2="814.9" y2="336.4" stroke="#404040" stroke-width="0.6"/><line x1="827.6" y1="333.4" x2="827.6" y2="336.4" stroke="#404040" stroke-width="0.8"/><line x1="840.3" y1="334.9" x2="840.3" y2="336.4" stroke="#404040" stroke-width="0.6"/><line x1="853.0" y1="334.9" x2="853.0" y2="336.4" stroke="#404040" stroke-width="0.6"/><line x1="865.6" y1="334.9" x2="865.6" y2="336.4" stroke="#404040" stroke-width="0.6"/><line x1="878.3" y1="334.9" x2="878.3" y2="336.4" stroke="#404040" stroke-width="0.6"/><line x1="891.0" y1="333.4" x2="891.0" y2="336.4" stroke="#404040" stroke-width="0.8"/><line x1="903.7" y1="334.9" x2="903.7" y2="336.4" stroke="#404040" stroke-width="0.6"/><line x1="916.4" y1="334.9" x2="916.4" y2="336.4" stroke="#404040" stroke-width="0.6"/><text x="383.8" y="343.6" font-size="5.4" fill="#303030" font-family="Liberation Sans">1 500 000.0</text><text x="447.2" y="343.6" font-size="5.4" fill="#303030" font-family="Liberation Sans">1 800 000.0</text><text x="510.6" y="343.6" font-size="5.4" fill="#303030" font-family="Liberation Sans">2 100 000.0</text><text x="574.0" y="343.6" font-size="5.4" fill="#303030" font-family="Liberation Sans">2 400 000.0</text><text x="637.4" y="343.6" font-size="5.4" fill="#303030" font-family="Liberation Sans">2 700 000.0</text><text x="700.8" y="343.6" font-size="5.4" fill="#303030" font-family="Liberation Sans">3 000 000.0</text><text x="764.2" y="343.6" font-size="5.4" fill="#303030" font-family="Liberation Sans">3 300 000.0</text><text x="827.6" y="343.6" font-size="5.4" fill="#303030" font-family="Liberation Sans">3 600 000.0</text><text x="891.0" y="343.6" font-size="5.4" fill="#303030" font-family="Liberation Sans">3 900 000.0</text><line x1="374.5" y1="398" x2="374.5" y2="516" stroke="#c82828" stroke-width="1"/><line x1="374.5" y1="463.5" x2="917" y2="463.5" stroke="#3c3cff" stroke-width="1"/><text x="372.5" y="406.0" font-size="5.4" fill="#303030" font-family="Liberation Sans" text-anchor="end">8</text><text x="372.5" y="421.0" font-size="5.4" fill="#303030" font-family="Liberation Sans" text-anchor="end">6</text><text x="372.5" y="436.0" font-size="5.4" fill="#303030" font-family="Liberation Sans" text-anchor="end">4</text><text x="372.5" y="451.0" font-size="5.4" fill="#303030" font-family="Liberation Sans" text-anchor="end">2</text><text x="372.5" y="466.5" font-size="5.4" fill="#303030" font-family="Liberation Sans" text-anchor="end">0</text><text x="372.5" y="489.0" font-size="5.4" fill="#303030" font-family="Liberation Sans" text-anchor="end">-3</text><rect x="385" y="434.5" width="7.6" height="29.0" fill="#0a0aff"/><line x1="389" y1="434.5" x2="389" y2="463.5" stroke="#fff" stroke-width="0.6"/><path d="M392.6 463.5 L392.6 447.5 L409.6 421.3 L409.6 472.4 L399.6 463.5 Z" fill="#0a0aff"/><line x1="396.8" y1="430" x2="396.8" y2="463.5" stroke="#ffffff" stroke-width="0.5" opacity="0.8"/><line x1="401.0" y1="430" x2="401.0" y2="463.5" stroke="#ffffff" stroke-width="0.5" opacity="0.8"/><line x1="405.2" y1="430" x2="405.2" y2="463.5" stroke="#ffffff" stroke-width="0.5" opacity="0.8"/><path d="M394.1 447 L395.6 456 L396.1 446 Z" fill="#fff"/><path d="M409.6 463.5 L409.6 447.5 L426.7 421.3 L426.7 472.4 L416.7 463.5 Z" fill="#0a0aff"/><line x1="413.8" y1="430" x2="413.8" y2="463.5" stroke="#ffffff" stroke-width="0.5" opacity="0.8"/><line x1="418.0" y1="430" x2="418.0" y2="463.5" stroke="#ffffff" stroke-width="0.5" opacity="0.8"/><line x1="422.2" y1="430" x2="422.2" y2="463.5" stroke="#ffffff" stroke-width="0.5" opacity="0.8"/><path d="M411.1 447 L412.6 456 L413.1 446 Z" fill="#fff"/><path d="M426.7 463.5 L426.7 447.5 L443.7 421.3 L443.7 472.4 L433.7 463.5 Z" fill="#0a0aff"/><line x1="430.9" y1="430" x2="430.9" y2="463.5" stroke="#ffffff" stroke-width="0.5" opacity="0.8"/><line x1="435.1" y1="430" x2="435.1" y2="463.5" stroke="#ffffff" stroke-width="0.5" opacity="0.8"/><line x1="439.3" y1="430" x2="439.3" y2="463.5" stroke="#ffffff" stroke-width="0.5" opacity="0.8"/><path d="M428.2 447 L429.7 456 L430.2 446 Z" fill="#fff"/><path d="M443.7 463.5 L443.7 447.5 L460.8 421.3 L460.8 472.4 L450.8 463.5 Z" fill="#0a0aff"/><line x1="447.9" y1="430" x2="447.9" y2="463.5" stroke="#ffffff" stroke-width="0.5" opacity="0.8"/><line x1="452.1" y1="430" x2="452.1" y2="463.5" stroke="#ffffff" stroke-width="0.5" opacity="0.8"/><line x1="456.3" y1="430" x2="456.3" y2="463.5" stroke="#ffffff" stroke-width="0.5" opacity="0.8"/><path d="M445.2 447 L446.7 456 L447.2 446 Z" fill="#fff"/><path d="M460.8 463.5 L460.8 447.5 L477.8 421.3 L477.8 472.4 L467.8 463.5 Z" fill="#0a0aff"/><line x1="464.9" y1="430" x2="464.9" y2="463.5" stroke="#ffffff" stroke-width="0.5" opacity="0.8"/><line x1="469.1" y1="430" x2="469.1" y2="463.5" stroke="#ffffff" stroke-width="0.5" opacity="0.8"/><line x1="473.4" y1="430" x2="473.4" y2="463.5" stroke="#ffffff" stroke-width="0.5" opacity="0.8"/><path d="M462.2 447 L463.8 456 L464.2 446 Z" fill="#fff"/><path d="M477.8 463.5 L477.8 447.5 L494.9 421.3 L494.9 472.4 L484.9 463.5 Z" fill="#0a0aff"/><line x1="482.0" y1="430" x2="482.0" y2="463.5" stroke="#ffffff" stroke-width="0.5" opacity="0.8"/><line x1="486.2" y1="430" x2="486.2" y2="463.5" stroke="#ffffff" stroke-width="0.5" opacity="0.8"/><line x1="490.4" y1="430" x2="490.4" y2="463.5" stroke="#ffffff" stroke-width="0.5" opacity="0.8"/><path d="M479.3 447 L480.8 456 L481.3 446 Z" fill="#fff"/><path d="M494.9 463.5 L494.9 447.5 L511.9 421.3 L511.9 472.4 L501.9 463.5 Z" fill="#0a0aff"/><line x1="499.1" y1="430" x2="499.1" y2="463.5" stroke="#ffffff" stroke-width="0.5" opacity="0.8"/><line x1="503.2" y1="430" x2="503.2" y2="463.5" stroke="#ffffff" stroke-width="0.5" opacity="0.8"/><line x1="507.5" y1="430" x2="507.5" y2="463.5" stroke="#ffffff" stroke-width="0.5" opacity="0.8"/><path d="M496.4 447 L497.9 456 L498.4 446 Z" fill="#fff"/><path d="M511.9 463.5 L511.9 447.5 L529.0 421.3 L529.0 472.4 L519.0 463.5 Z" fill="#0a0aff"/><line x1="516.1" y1="430" x2="516.1" y2="463.5" stroke="#ffffff" stroke-width="0.5" opacity="0.8"/><line x1="520.3" y1="430" x2="520.3" y2="463.5" stroke="#ffffff" stroke-width="0.5" opacity="0.8"/><line x1="524.5" y1="430" x2="524.5" y2="463.5" stroke="#ffffff" stroke-width="0.5" opacity="0.8"/><path d="M513.4 447 L514.9 456 L515.4 446 Z" fill="#fff"/><text x="383.8" y="470.7" font-size="5.4" fill="#303030" font-family="Liberation Sans">1 500 000.0</text><text x="447.2" y="470.7" font-size="5.4" fill="#303030" font-family="Liberation Sans">1 800 000.0</text><text x="510.6" y="470.7" font-size="5.4" fill="#303030" font-family="Liberation Sans">2 100 000.0</text><text x="574.0" y="470.7" font-size="5.4" fill="#303030" font-family="Liberation Sans">2 400 000.0</text><text x="637.4" y="470.7" font-size="5.4" fill="#303030" font-family="Liberation Sans">2 700 000.0</text><text x="700.8" y="470.7" font-size="5.4" fill="#303030" font-family="Liberation Sans">3 000 000.0</text><text x="764.2" y="470.7" font-size="5.4" fill="#303030" font-family="Liberation Sans">3 300 000.0</text><text x="827.6" y="470.7" font-size="5.4" fill="#303030" font-family="Liberation Sans">3 600 000.0</text><text x="891.0" y="470.7" font-size="5.4" fill="#303030" font-family="Liberation Sans">3 900 000.0</text><rect x="533.4" y="463.5" width="72.8" height="45.5" fill="#0a0aff"/><line x1="534.4" y1="361.5" x2="534.4" y2="463.5" stroke="#4646ff" stroke-width="0.9"/><line x1="536.6" y1="464.5" x2="536.6" y2="509" stroke="#c8c8ff" stroke-width="0.5" opacity="0.7"/><line x1="538.9" y1="361.5" x2="538.9" y2="463.5" stroke="#6c6cff" stroke-width="0.9"/><line x1="541.1" y1="464.5" x2="541.1" y2="509" stroke="#c8c8ff" stroke-width="0.5" opacity="0.7"/><line x1="543.5" y1="361.5" x2="543.5" y2="463.5" stroke="#9898ff" stroke-width="0.9"/><line x1="545.7" y1="464.5" x2="545.7" y2="509" stroke="#c8c8ff" stroke-width="0.5" opacity="0.7"/><line x1="548.0" y1="361.5" x2="548.0" y2="463.5" stroke="#5454ff" stroke-width="0.9"/><line x1="550.2" y1="464.5" x2="550.2" y2="509" stroke="#c8c8ff" stroke-width="0.5" opacity="0.7"/><line x1="552.6" y1="361.5" x2="552.6" y2="463.5" stroke="#2c2cff" stroke-width="0.9"/><line x1="554.8" y1="464.5" x2="554.8" y2="509" stroke="#c8c8ff" stroke-width="0.5" opacity="0.7"/><line x1="557.1" y1="361.5" x2="557.1" y2="463.5" stroke="#7878ff" stroke-width="0.9"/><line x1="559.4" y1="464.5" x2="559.4" y2="509" stroke="#c8c8ff" stroke-width="0.5" opacity="0.7"/><line x1="561.7" y1="361.5" x2="561.7" y2="463.5" stroke="#4646ff" stroke-width="0.9"/><line x1="563.9" y1="464.5" x2="563.9" y2="509" stroke="#c8c8ff" stroke-width="0.5" opacity="0.7"/><line x1="566.2" y1="361.5" x2="566.2" y2="463.5" stroke="#6c6cff" stroke-width="0.9"/><line x1="568.5" y1="464.5" x2="568.5" y2="509" stroke="#c8c8ff" stroke-width="0.5" opacity="0.7"/><line x1="570.8" y1="361.5" x2="570.8" y2="463.5" stroke="#9898ff" stroke-width="0.9"/><line x1="573.0" y1="464.5" x2="573.0" y2="509" stroke="#c8c8ff" stroke-width="0.5" opacity="0.7"/><line x1="575.4" y1="361.5" x2="575.4" y2="463.5" stroke="#5454ff" stroke-width="0.9"/><line x1="577.6" y1="464.5" x2="577.6" y2="509" stroke="#c8c8ff" stroke-width="0.5" opacity="0.7"/><line x1="579.9" y1="361.5" x2="579.9" y2="463.5" stroke="#2c2cff" stroke-width="0.9"/><line x1="582.1" y1="464.5" x2="582.1" y2="509" stroke="#c8c8ff" stroke-width="0.5" opacity="0.7"/><line x1="584.4" y1="361.5" x2="584.4" y2="463.5" stroke="#7878ff" stroke-width="0.9"/><line x1="586.6" y1="464.5" x2="586.6" y2="509" stroke="#c8c8ff" stroke-width="0.5" opacity="0.7"/><line x1="589.0" y1="361.5" x2="589.0" y2="463.5" stroke="#4646ff" stroke-width="0.9"/><line x1="591.2" y1="464.5" x2="591.2" y2="509" stroke="#c8c8ff" stroke-width="0.5" opacity="0.7"/><line x1="593.5" y1="361.5" x2="593.5" y2="463.5" stroke="#6c6cff" stroke-width="0.9"/><line x1="595.8" y1="464.5" x2="595.8" y2="509" stroke="#c8c8ff" stroke-width="0.5" opacity="0.7"/><line x1="598.1" y1="361.5" x2="598.1" y2="463.5" stroke="#9898ff" stroke-width="0.9"/><line x1="600.3" y1="464.5" x2="600.3" y2="509" stroke="#c8c8ff" stroke-width="0.5" opacity="0.7"/><line x1="602.6" y1="361.5" x2="602.6" y2="463.5" stroke="#5454ff" stroke-width="0.9"/><line x1="604.9" y1="464.5" x2="604.9" y2="509" stroke="#c8c8ff" stroke-width="0.5" opacity="0.7"/><rect x="610.7" y="463.5" width="72.9" height="45.5" fill="#0a0aff"/><line x1="611.7" y1="361.5" x2="611.7" y2="463.5" stroke="#4646ff" stroke-width="0.9"/><line x1="613.9" y1="464.5" x2="613.9" y2="509" stroke="#c8c8ff" stroke-width="0.5" opacity="0.7"/><line x1="616.2" y1="361.5" x2="616.2" y2="463.5" stroke="#6c6cff" stroke-width="0.9"/><line x1="618.5" y1="464.5" x2="618.5" y2="509" stroke="#c8c8ff" stroke-width="0.5" opacity="0.7"/><line x1="620.8" y1="361.5" x2="620.8" y2="463.5" stroke="#9898ff" stroke-width="0.9"/><line x1="623.0" y1="464.5" x2="623.0" y2="509" stroke="#c8c8ff" stroke-width="0.5" opacity="0.7"/><line x1="625.4" y1="361.5" x2="625.4" y2="463.5" stroke="#5454ff" stroke-width="0.9"/><line x1="627.6" y1="464.5" x2="627.6" y2="509" stroke="#c8c8ff" stroke-width="0.5" opacity="0.7"/><line x1="629.9" y1="361.5" x2="629.9" y2="463.5" stroke="#2c2cff" stroke-width="0.9"/><line x1="632.1" y1="464.5" x2="632.1" y2="509" stroke="#c8c8ff" stroke-width="0.5" opacity="0.7"/><line x1="634.5" y1="361.5" x2="634.5" y2="463.5" stroke="#7878ff" stroke-width="0.9"/><line x1="636.7" y1="464.5" x2="636.7" y2="509" stroke="#c8c8ff" stroke-width="0.5" opacity="0.7"/><line x1="639.0" y1="361.5" x2="639.0" y2="463.5" stroke="#4646ff" stroke-width="0.9"/><line x1="641.2" y1="464.5" x2="641.2" y2="509" stroke="#c8c8ff" stroke-width="0.5" opacity="0.7"/><line x1="643.6" y1="361.5" x2="643.6" y2="463.5" stroke="#6c6cff" stroke-width="0.9"/><line x1="645.8" y1="464.5" x2="645.8" y2="509" stroke="#c8c8ff" stroke-width="0.5" opacity="0.7"/><line x1="648.1" y1="361.5" x2="648.1" y2="463.5" stroke="#9898ff" stroke-width="0.9"/><line x1="650.3" y1="464.5" x2="650.3" y2="509" stroke="#c8c8ff" stroke-width="0.5" opacity="0.7"/><line x1="652.7" y1="361.5" x2="652.7" y2="463.5" stroke="#5454ff" stroke-width="0.9"/><line x1="654.9" y1="464.5" x2="654.9" y2="509" stroke="#c8c8ff" stroke-width="0.5" opacity="0.7"/><line x1="657.2" y1="361.5" x2="657.2" y2="463.5" stroke="#2c2cff" stroke-width="0.9"/><line x1="659.4" y1="464.5" x2="659.4" y2="509" stroke="#c8c8ff" stroke-width="0.5" opacity="0.7"/><line x1="661.8" y1="361.5" x2="661.8" y2="463.5" stroke="#7878ff" stroke-width="0.9"/><line x1="664.0" y1="464.5" x2="664.0" y2="509" stroke="#c8c8ff" stroke-width="0.5" opacity="0.7"/><line x1="666.3" y1="361.5" x2="666.3" y2="463.5" stroke="#4646ff" stroke-width="0.9"/><line x1="668.5" y1="464.5" x2="668.5" y2="509" stroke="#c8c8ff" stroke-width="0.5" opacity="0.7"/><line x1="670.9" y1="361.5" x2="670.9" y2="463.5" stroke="#6c6cff" stroke-width="0.9"/><line x1="673.1" y1="464.5" x2="673.1" y2="509" stroke="#c8c8ff" stroke-width="0.5" opacity="0.7"/><line x1="675.4" y1="361.5" x2="675.4" y2="463.5" stroke="#9898ff" stroke-width="0.9"/><line x1="677.6" y1="464.5" x2="677.6" y2="509" stroke="#c8c8ff" stroke-width="0.5" opacity="0.7"/><line x1="680.0" y1="361.5" x2="680.0" y2="463.5" stroke="#5454ff" stroke-width="0.9"/><line x1="682.2" y1="464.5" x2="682.2" y2="509" stroke="#c8c8ff" stroke-width="0.5" opacity="0.7"/><rect x="689" y="463.5" width="72.2" height="45.5" fill="#0a0aff"/><line x1="690.0" y1="361.5" x2="690.0" y2="463.5" stroke="#4646ff" stroke-width="0.9"/><line x1="692.2" y1="464.5" x2="692.2" y2="509" stroke="#c8c8ff" stroke-width="0.5" opacity="0.7"/><line x1="694.5" y1="361.5" x2="694.5" y2="463.5" stroke="#6c6cff" stroke-width="0.9"/><line x1="696.8" y1="464.5" x2="696.8" y2="509" stroke="#c8c8ff" stroke-width="0.5" opacity="0.7"/><line x1="699.1" y1="361.5" x2="699.1" y2="463.5" stroke="#9898ff" stroke-width="0.9"/><line x1="701.3" y1="464.5" x2="701.3" y2="509" stroke="#c8c8ff" stroke-width="0.5" opacity="0.7"/><line x1="703.6" y1="361.5" x2="703.6" y2="463.5" stroke="#5454ff" stroke-width="0.9"/><line x1="705.9" y1="464.5" x2="705.9" y2="509" stroke="#c8c8ff" stroke-width="0.5" opacity="0.7"/><line x1="708.2" y1="361.5" x2="708.2" y2="463.5" stroke="#2c2cff" stroke-width="0.9"/><line x1="710.4" y1="464.5" x2="710.4" y2="509" stroke="#c8c8ff" stroke-width="0.5" opacity="0.7"/><line x1="712.8" y1="361.5" x2="712.8" y2="463.5" stroke="#7878ff" stroke-width="0.9"/><line x1="715.0" y1="464.5" x2="715.0" y2="509" stroke="#c8c8ff" stroke-width="0.5" opacity="0.7"/><line x1="717.3" y1="361.5" x2="717.3" y2="463.5" stroke="#4646ff" stroke-width="0.9"/><line x1="719.5" y1="464.5" x2="719.5" y2="509" stroke="#c8c8ff" stroke-width="0.5" opacity="0.7"/><line x1="721.9" y1="361.5" x2="721.9" y2="463.5" stroke="#6c6cff" stroke-width="0.9"/><line x1="724.1" y1="464.5" x2="724.1" y2="509" stroke="#c8c8ff" stroke-width="0.5" opacity="0.7"/><line x1="726.4" y1="361.5" x2="726.4" y2="463.5" stroke="#9898ff" stroke-width="0.9"/><line x1="728.6" y1="464.5" x2="728.6" y2="509" stroke="#c8c8ff" stroke-width="0.5" opacity="0.7"/><line x1="731.0" y1="361.5" x2="731.0" y2="463.5" stroke="#5454ff" stroke-width="0.9"/><line x1="733.2" y1="464.5" x2="733.2" y2="509" stroke="#c8c8ff" stroke-width="0.5" opacity="0.7"/><line x1="735.5" y1="361.5" x2="735.5" y2="463.5" stroke="#2c2cff" stroke-width="0.9"/><line x1="737.7" y1="464.5" x2="737.7" y2="509" stroke="#c8c8ff" stroke-width="0.5" opacity="0.7"/><line x1="740.0" y1="361.5" x2="740.0" y2="463.5" stroke="#7878ff" stroke-width="0.9"/><line x1="742.2" y1="464.5" x2="742.2" y2="509" stroke="#c8c8ff" stroke-width="0.5" opacity="0.7"/><line x1="744.6" y1="361.5" x2="744.6" y2="463.5" stroke="#4646ff" stroke-width="0.9"/><line x1="746.8" y1="464.5" x2="746.8" y2="509" stroke="#c8c8ff" stroke-width="0.5" opacity="0.7"/><line x1="749.1" y1="361.5" x2="749.1" y2="463.5" stroke="#6c6cff" stroke-width="0.9"/><line x1="751.4" y1="464.5" x2="751.4" y2="509" stroke="#c8c8ff" stroke-width="0.5" opacity="0.7"/><line x1="753.7" y1="361.5" x2="753.7" y2="463.5" stroke="#9898ff" stroke-width="0.9"/><line x1="755.9" y1="464.5" x2="755.9" y2="509" stroke="#c8c8ff" stroke-width="0.5" opacity="0.7"/><line x1="758.2" y1="361.5" x2="758.2" y2="463.5" stroke="#5454ff" stroke-width="0.9"/><line x1="760.5" y1="464.5" x2="760.5" y2="509" stroke="#c8c8ff" stroke-width="0.5" opacity="0.7"/><rect x="766.2" y="463.5" width="72.8" height="45.5" fill="#0a0aff"/><line x1="767.2" y1="361.5" x2="767.2" y2="463.5" stroke="#4646ff" stroke-width="0.9"/><line x1="769.4" y1="464.5" x2="769.4" y2="509" stroke="#c8c8ff" stroke-width="0.5" opacity="0.7"/><line x1="771.8" y1="361.5" x2="771.8" y2="463.5" stroke="#6c6cff" stroke-width="0.9"/><line x1="774.0" y1="464.5" x2="774.0" y2="509" stroke="#c8c8ff" stroke-width="0.5" opacity="0.7"/><line x1="776.3" y1="361.5" x2="776.3" y2="463.5" stroke="#9898ff" stroke-width="0.9"/><line x1="778.5" y1="464.5" x2="778.5" y2="509" stroke="#c8c8ff" stroke-width="0.5" opacity="0.7"/><line x1="780.9" y1="361.5" x2="780.9" y2="463.5" stroke="#5454ff" stroke-width="0.9"/><line x1="783.1" y1="464.5" x2="783.1" y2="509" stroke="#c8c8ff" stroke-width="0.5" opacity="0.7"/><line x1="785.4" y1="361.5" x2="785.4" y2="463.5" stroke="#2c2cff" stroke-width="0.9"/><line x1="787.6" y1="464.5" x2="787.6" y2="509" stroke="#c8c8ff" stroke-width="0.5" opacity="0.7"/><line x1="790.0" y1="361.5" x2="790.0" y2="463.5" stroke="#7878ff" stroke-width="0.9"/><line x1="792.2" y1="464.5" x2="792.2" y2="509" stroke="#c8c8ff" stroke-width="0.5" opacity="0.7"/><line x1="794.5" y1="361.5" x2="794.5" y2="463.5" stroke="#4646ff" stroke-width="0.9"/><line x1="796.7" y1="464.5" x2="796.7" y2="509" stroke="#c8c8ff" stroke-width="0.5" opacity="0.7"/><line x1="799.1" y1="361.5" x2="799.1" y2="463.5" stroke="#6c6cff" stroke-width="0.9"/><line x1="801.3" y1="464.5" x2="801.3" y2="509" stroke="#c8c8ff" stroke-width="0.5" opacity="0.7"/><line x1="803.6" y1="361.5" x2="803.6" y2="463.5" stroke="#9898ff" stroke-width="0.9"/><line x1="805.8" y1="464.5" x2="805.8" y2="509" stroke="#c8c8ff" stroke-width="0.5" opacity="0.7"/><line x1="808.2" y1="361.5" x2="808.2" y2="463.5" stroke="#5454ff" stroke-width="0.9"/><line x1="810.4" y1="464.5" x2="810.4" y2="509" stroke="#c8c8ff" stroke-width="0.5" opacity="0.7"/><line x1="812.7" y1="361.5" x2="812.7" y2="463.5" stroke="#2c2cff" stroke-width="0.9"/><line x1="814.9" y1="464.5" x2="814.9" y2="509" stroke="#c8c8ff" stroke-width="0.5" opacity="0.7"/><line x1="817.2" y1="361.5" x2="817.2" y2="463.5" stroke="#7878ff" stroke-width="0.9"/><line x1="819.5" y1="464.5" x2="819.5" y2="509" stroke="#c8c8ff" stroke-width="0.5" opacity="0.7"/><line x1="821.8" y1="361.5" x2="821.8" y2="463.5" stroke="#4646ff" stroke-width="0.9"/><line x1="824.0" y1="464.5" x2="824.0" y2="509" stroke="#c8c8ff" stroke-width="0.5" opacity="0.7"/><line x1="826.4" y1="361.5" x2="826.4" y2="463.5" stroke="#6c6cff" stroke-width="0.9"/><line x1="828.6" y1="464.5" x2="828.6" y2="509" stroke="#c8c8ff" stroke-width="0.5" opacity="0.7"/><line x1="830.9" y1="361.5" x2="830.9" y2="463.5" stroke="#9898ff" stroke-width="0.9"/><line x1="833.1" y1="464.5" x2="833.1" y2="509" stroke="#c8c8ff" stroke-width="0.5" opacity="0.7"/><line x1="835.5" y1="361.5" x2="835.5" y2="463.5" stroke="#5454ff" stroke-width="0.9"/><line x1="837.7" y1="464.5" x2="837.7" y2="509" stroke="#c8c8ff" stroke-width="0.5" opacity="0.7"/><rect x="844" y="463.5" width="73.0" height="45.5" fill="#0a0aff"/><line x1="845.0" y1="361.5" x2="845.0" y2="463.5" stroke="#4646ff" stroke-width="0.9"/><line x1="847.2" y1="464.5" x2="847.2" y2="509" stroke="#c8c8ff" stroke-width="0.5" opacity="0.7"/><line x1="849.5" y1="361.5" x2="849.5" y2="463.5" stroke="#6c6cff" stroke-width="0.9"/><line x1="851.8" y1="464.5" x2="851.8" y2="509" stroke="#c8c8ff" stroke-width="0.5" opacity="0.7"/><line x1="854.1" y1="361.5" x2="854.1" y2="463.5" stroke="#9898ff" stroke-width="0.9"/><line x1="856.3" y1="464.5" x2="856.3" y2="509" stroke="#c8c8ff" stroke-width="0.5" opacity="0.7"/><line x1="858.6" y1="361.5" x2="858.6" y2="463.5" stroke="#5454ff" stroke-width="0.9"/><line x1="860.9" y1="464.5" x2="860.9" y2="509" stroke="#c8c8ff" stroke-width="0.5" opacity="0.7"/><line x1="863.2" y1="361.5" x2="863.2" y2="463.5" stroke="#2c2cff" stroke-width="0.9"/><line x1="865.4" y1="464.5" x2="865.4" y2="509" stroke="#c8c8ff" stroke-width="0.5" opacity="0.7"/><line x1="867.8" y1="361.5" x2="867.8" y2="463.5" stroke="#7878ff" stroke-width="0.9"/><line x1="870.0" y1="464.5" x2="870.0" y2="509" stroke="#c8c8ff" stroke-width="0.5" opacity="0.7"/><line x1="872.3" y1="361.5" x2="872.3" y2="463.5" stroke="#4646ff" stroke-width="0.9"/><line x1="874.5" y1="464.5" x2="874.5" y2="509" stroke="#c8c8ff" stroke-width="0.5" opacity="0.7"/><line x1="876.9" y1="361.5" x2="876.9" y2="463.5" stroke="#6c6cff" stroke-width="0.9"/><line x1="879.1" y1="464.5" x2="879.1" y2="509" stroke="#c8c8ff" stroke-width="0.5" opacity="0.7"/><line x1="881.4" y1="361.5" x2="881.4" y2="463.5" stroke="#9898ff" stroke-width="0.9"/><line x1="883.6" y1="464.5" x2="883.6" y2="509" stroke="#c8c8ff" stroke-width="0.5" opacity="0.7"/><line x1="886.0" y1="361.5" x2="886.0" y2="463.5" stroke="#5454ff" stroke-width="0.9"/><line x1="888.2" y1="464.5" x2="888.2" y2="509" stroke="#c8c8ff" stroke-width="0.5" opacity="0.7"/><line x1="890.5" y1="361.5" x2="890.5" y2="463.5" stroke="#2c2cff" stroke-width="0.9"/><line x1="892.7" y1="464.5" x2="892.7" y2="509" stroke="#c8c8ff" stroke-width="0.5" opacity="0.7"/><line x1="895.0" y1="361.5" x2="895.0" y2="463.5" stroke="#7878ff" stroke-width="0.9"/><line x1="897.2" y1="464.5" x2="897.2" y2="509" stroke="#c8c8ff" stroke-width="0.5" opacity="0.7"/><line x1="899.6" y1="361.5" x2="899.6" y2="463.5" stroke="#4646ff" stroke-width="0.9"/><line x1="901.8" y1="464.5" x2="901.8" y2="509" stroke="#c8c8ff" stroke-width="0.5" opacity="0.7"/><line x1="904.1" y1="361.5" x2="904.1" y2="463.5" stroke="#6c6cff" stroke-width="0.9"/><line x1="906.4" y1="464.5" x2="906.4" y2="509" stroke="#c8c8ff" stroke-width="0.5" opacity="0.7"/><line x1="908.7" y1="361.5" x2="908.7" y2="463.5" stroke="#9898ff" stroke-width="0.9"/><line x1="910.9" y1="464.5" x2="910.9" y2="509" stroke="#c8c8ff" stroke-width="0.5" opacity="0.7"/><line x1="913.2" y1="361.5" x2="913.2" y2="463.5" stroke="#5454ff" stroke-width="0.9"/><line x1="915.5" y1="464.5" x2="915.5" y2="509" stroke="#c8c8ff" stroke-width="0.5" opacity="0.7"/></g></svg>
<div style="left:2px;top:5px;width:466.6px;height:392px;background:#45515c;border-top:1px solid #e8e8e8;border-left:1px solid #e8e8e8;border-right:1px solid #b0b0b0;border-bottom:1px solid #c8c8c8"></div>
<div style="left:3.5px;top:7px;width:463px;height:8.5px;background:linear-gradient(90deg,#0a246a 0%,#3a6ab8 45%,#a6caf0 100%)"></div>
<div style="left:5px;top:7.8px;width:7px;height:7px;background:#707880;border:1px solid #303840"></div>
<div style="left:13.1px;top:7.46px;font-size:6.4px;line-height:7.68px;color:#ffffff;font-weight:700;transform:scaleX(0.905);transform-origin:0 50%;">Dot Cockpit - Poet (N4_VE11C_LATEST_20160120)</div>
<div style="left:449px;top:8px;width:8px;height:7px;background:#d4d0c8;border-right:1px solid #404040;border-bottom:1px solid #404040;border-top:1px solid #fff;border-left:1px solid #fff"></div>
<div style="left:450.5px;top:7.80px;font-size:6px;line-height:7.20px;color:#000;font-weight:700;">?</div>
<div style="left:458px;top:8px;width:8px;height:7px;background:#d4d0c8;border-right:1px solid #404040;border-bottom:1px solid #404040;border-top:1px solid #fff;border-left:1px solid #fff"></div>
<div style="left:459.6px;top:7.20px;font-size:7px;line-height:8.40px;color:#000;font-weight:700;">×</div>
<div style="left:7px;top:19px;width:26px;height:22px;background:linear-gradient(#46515c,#363f48);border-top:1.6px solid #3a6a98"></div>
<div class="t" style="left:10px;top:21.30px;font-size:4.5px;line-height:5.40px;color:#5a8ae0;font-weight:400;">POET</div>
<div style="left:7px;top:42px;width:456px;height:15px;background:linear-gradient(#5a656f,#4f5a64);border-bottom:1px solid #3a434c"></div>
<div class="t" style="left:13.2px;top:46.62px;font-size:6.8px;line-height:8.16px;color:#e4e8ec;font-weight:400;">File</div>
<div class="t" style="left:29.6px;top:46.62px;font-size:6.8px;line-height:8.16px;color:#e4e8ec;font-weight:400;">System Configuration</div>
<div class="t" style="left:100.9px;top:46.62px;font-size:6.8px;line-height:8.16px;color:#e4e8ec;font-weight:400;">Tools</div>
<div class="t" style="left:74.7px;top:64.56px;font-size:6.9px;line-height:8.28px;color:#e0e4e8;font-weight:400;">TA: 4.0 s</div>
<div class="t" style="left:108.5px;top:64.56px;font-size:6.9px;line-height:8.28px;color:#e0e4e8;font-weight:400;">PM: REF</div>
<div class="t" style="left:169px;top:64.56px;font-size:6.9px;line-height:8.28px;color:#e0e4e8;font-weight:400;">PAT: 3</div>
<div class="t" style="left:234px;top:64.54px;font-size:6.94px;line-height:8.33px;color:#e0e4e8;font-weight:400;">Voxel size: 2.5×2.5×2.5mm Rel. SNR: 0.24 : 684e6dda</div>
<div style="left:68.6px;top:80px;width:33.400000000000006px;height:11px;background:linear-gradient(#46505a,#3e4852);border:1px solid #39424b;border-bottom:1.5px solid #262d34"></div>
<div style="left:68.6px;top:80px;width:33.400000000000006px;height:11px;font-size:6.6px;line-height:11px;color:#dfe3e7;text-align:center">Routine</div>
<div style="left:104px;top:80px;width:35.5px;height:11px;background:linear-gradient(#46505a,#3e4852);border:1px solid #39424b;border-bottom:1.5px solid #262d34"></div>
<div style="left:104px;top:80px;width:35.5px;height:11px;font-size:6.6px;line-height:11px;color:#dfe3e7;text-align:center">Contrast</div>
<div style="left:141px;top:80px;width:41.5px;height:11px;background:linear-gradient(#46505a,#3e4852);border:1px solid #39424b;border-bottom:1.5px solid #262d34"></div>
<div style="left:141px;top:80px;width:41.5px;height:11px;font-size:6.6px;line-height:11px;color:#dfe3e7;text-align:center">Resolution</div>
<div style="left:184.5px;top:80px;width:39.5px;height:11px;background:linear-gradient(#46505a,#3e4852);border:1px solid #39424b;border-bottom:1.5px solid #262d34"></div>
<div style="left:184.5px;top:80px;width:39.5px;height:11px;font-size:6.6px;line-height:11px;color:#dfe3e7;text-align:center">Geometry</div>
<div style="left:226px;top:80px;width:32px;height:11px;background:linear-gradient(#46505a,#3e4852);border:1px solid #39424b;border-bottom:1.5px solid #262d34"></div>
<div style="left:226px;top:80px;width:32px;height:11px;font-size:6.6px;line-height:11px;color:#dfe3e7;text-align:center">System</div>
<div style="left:259.5px;top:79.8px;width:40px;height:11.5px;background:linear-gradient(#66717b,#4e5963);border:1px solid #3a434c;border-bottom:none"></div>
<div style="left:259.5px;top:79.5px;width:40px;height:12px;font-size:6.6px;line-height:12px;color:#eef1f4;text-align:center">Sequence</div>
<div style="left:68px;top:91px;width:334px;height:14.5px;background:linear-gradient(#434c55,#2c343c);border-bottom:1px solid #1e242a"></div>
<div class="t" style="left:175.5px;top:94.84px;font-size:6.6px;line-height:7.92px;color:#e0e4e8;font-weight:400;">Part 1</div>
<div class="t" style="left:205.5px;top:94.84px;font-size:6.6px;line-height:7.92px;color:#e0e4e8;font-weight:400;">Part 2</div>
<div style="left:230.5px;top:93.3px;width:30px;height:12.2px;background:linear-gradient(#56616b,#47525c);border:1px solid #262d34;border-bottom:none;border-radius:1px 1px 0 0"></div>
<div class="t" style="left:235.5px;top:95.24px;font-size:6.6px;line-height:7.92px;color:#eef1f4;font-weight:400;">Special</div>
<div class="t" style="left:268px;top:94.84px;font-size:6.6px;line-height:7.92px;color:#e0e4e8;font-weight:400;">Assistant</div>
<div class="t" style="left:83.8px;top:111.62px;font-size:6.63px;line-height:7.96px;color:#e0e4e8;font-weight:400;">PATRef FA</div>
<div style="left:117.5px;top:110px;width:10px;height:11px;background:linear-gradient(#58636d,#444e58);border:1px solid #3a434c"></div>
<div style="left:127.5px;top:110px;width:10px;height:11px;background:linear-gradient(#58636d,#444e58);border:1px solid #3a434c"></div>
<div class="t" style="left:120.0px;top:111.70px;font-size:6px;line-height:7.20px;color:#b8c0c8;font-weight:400;">◂</div>
<div class="t" style="left:130.0px;top:111.70px;font-size:6px;line-height:7.20px;color:#b8c0c8;font-weight:400;">▸</div>
<div style="left:138px;top:109.5px;width:39px;height:12px;background:linear-gradient(#3e4852,#4c5660);border:1px solid #39424b"></div>
<div style="left:138px;top:109.5px;width:31.5px;height:12px;font-size:6.9px;line-height:12px;color:#e8ecf0;text-align:right">3</div>
<div style="left:170.5px;top:110.0px;width:6px;height:5.5px;background:#4e5862;border:1px solid #3a434c"></div>
<div style="left:170.5px;top:115.5px;width:6px;height:5.5px;background:#4e5862;border:1px solid #3a434c"></div>
<div style="left:172.5px;top:112.5px;width:2px;height:1px;background:#c0c8d0"></div>
<div style="left:172.5px;top:118.0px;width:2px;height:1px;background:#c0c8d0"></div>
<div class="t" style="left:185px;top:111.52px;font-size:6.8px;line-height:8.16px;color:#e0e4e8;font-weight:400;">deg</div>
<div style="left:168px;top:111px;width:100px;font-size:6.6px;line-height:8.2px;color:#dfe3e7;text-align:right">Mosaic DICOMs</div>
<div style="left:269px;top:109.5px;width:10px;height:11px;background:linear-gradient(#58636d,#444e58);border:1px solid #3a434c"></div>
<div style="left:279px;top:109.5px;width:10px;height:11px;background:linear-gradient(#58636d,#444e58);border:1px solid #3a434c"></div>
<div class="t" style="left:271.5px;top:111.20px;font-size:6px;line-height:7.20px;color:#b8c0c8;font-weight:400;">◂</div>
<div class="t" style="left:281.5px;top:111.20px;font-size:6px;line-height:7.20px;color:#b8c0c8;font-weight:400;">▸</div>
<div class="t" style="left:289px;top:111.24px;font-size:6.6px;line-height:7.92px;color:#dfe3e7;font-weight:400;">Mosaic DICOMs</div>
<div style="left:341px;top:111px;width:8px;height:8px;background:#4b5560;border:1px solid #5a646e"></div>
<div class="t" style="left:342.2px;top:111.40px;font-size:6px;line-height:7.20px;color:#b0b8c0;font-weight:400;">✓</div>
<div class="t" style="left:72.7px;top:127.50px;font-size:6.5px;line-height:7.80px;color:#e0e4e8;font-weight:400;">NORDIC</div>
<div style="left:99px;top:126px;width:10px;height:11px;background:linear-gradient(#58636d,#444e58);border:1px solid #3a434c"></div>
<div style="left:109px;top:126px;width:10px;height:11px;background:linear-gradient(#58636d,#444e58);border:1px solid #3a434c"></div>
<div class="t" style="left:101.5px;top:127.70px;font-size:6px;line-height:7.20px;color:#b8c0c8;font-weight:400;">◂</div>
<div class="t" style="left:111.5px;top:127.70px;font-size:6px;line-height:7.20px;color:#b8c0c8;font-weight:400;">▸</div>
<div class="t" style="left:119.5px;top:127.50px;font-size:6.5px;line-height:7.80px;color:#e0e4e8;font-weight:400;">NORDIC</div>
<div style="left:149px;top:127.5px;width:8px;height:8px;background:#4b5560;border:1px solid #5a646e"></div>
<div class="t" style="left:150.2px;top:127.90px;font-size:6px;line-height:7.20px;color:#b0b8c0;font-weight:400;">✓</div>
<div class="t" style="left:264.5px;top:127.04px;font-size:6.6px;line-height:7.92px;color:#e0e4e8;font-weight:400;">HSN RF power scale</div>
<div style="left:330px;top:125.5px;width:43px;height:12px;background:linear-gradient(#3e4852,#4c5660);border:1px solid #39424b"></div>
<div style="left:330px;top:125.5px;width:35.5px;height:12px;font-size:6.9px;line-height:12px;color:#e8ecf0;text-align:right">2.00</div>
<div style="left:366.5px;top:126.0px;width:6px;height:5.5px;background:#4e5862;border:1px solid #3a434c"></div>
<div style="left:366.5px;top:131.5px;width:6px;height:5.5px;background:#4e5862;border:1px solid #3a434c"></div>
<div style="left:368.5px;top:128.5px;width:2px;height:1px;background:#c0c8d0"></div>
<div style="left:368.5px;top:134.0px;width:2px;height:1px;background:#c0c8d0"></div>
<div class="t" style="left:101px;top:158.92px;font-size:6.8px;line-height:8.16px;color:#e0e4e8;font-weight:400;">Water Exc</div>
<div class="t" style="left:99px;top:174.52px;font-size:6.8px;line-height:8.16px;color:#e0e4e8;font-weight:400;">External PC</div>
<div class="t" style="left:75.5px;top:205.83px;font-size:6.95px;line-height:8.34px;color:#e0e4e8;font-weight:400;">EPI rise time factor</div>
<div style="left:358px;top:142.5px;width:0px;height:12px;background:linear-gradient(#3e4852,#4c5660);border:1px solid #39424b"></div>
<div style="left:358px;top:142.5px;width:-7.5px;height:12px;font-size:6.9px;line-height:12px;color:#e8ecf0;text-align:right"></div>
<div style="left:351.5px;top:143.0px;width:6px;height:5.5px;background:#4e5862;border:1px solid #3a434c"></div>
<div style="left:351.5px;top:148.5px;width:6px;height:5.5px;background:#4e5862;border:1px solid #3a434c"></div>
<div style="left:353.5px;top:145.5px;width:2px;height:1px;background:#c0c8d0"></div>
<div style="left:353.5px;top:151.0px;width:2px;height:1px;background:#c0c8d0"></div>
<div style="left:357px;top:142.5px;width:0px;height:0px;"></div>
<div style="left:357px;top:142px;width:8px;height:9.6px;background:#4a555f;border:1px solid #3c4650"></div>
<div class="t" style="left:357.8px;top:142.76px;font-size:6.9px;line-height:8.28px;color:#e8ecf0;font-weight:400;">0</div>
<div style="left:365px;top:142px;width:8.5px;height:4.9px;background:#505a64;border:1px solid #3a434c"></div>
<div style="left:365px;top:146.8px;width:8.5px;height:4.9px;background:#505a64;border:1px solid #3a434c"></div>
<div style="left:368.5px;top:144px;width:1.5px;height:0.8px;background:#c0c8d0"></div>
<div style="left:368.5px;top:148.8px;width:1.5px;height:0.8px;background:#c0c8d0"></div>
<div style="left:357px;top:157.6px;width:8px;height:9.6px;background:#4a555f;border:1px solid #3c4650"></div>
<div class="t" style="left:357.8px;top:158.36px;font-size:6.9px;line-height:8.28px;color:#e8ecf0;font-weight:400;">4</div>
<div style="left:365px;top:157.6px;width:8.5px;height:4.9px;background:#505a64;border:1px solid #3a434c"></div>
<div style="left:365px;top:162.4px;width:8.5px;height:4.9px;background:#505a64;border:1px solid #3a434c"></div>
<div style="left:368.5px;top:159.6px;width:1.5px;height:0.8px;background:#c0c8d0"></div>
<div style="left:368.5px;top:164.4px;width:1.5px;height:0.8px;background:#c0c8d0"></div>
<div class="t" style="left:377px;top:143.36px;font-size:6.9px;line-height:8.28px;color:#e0e4e8;font-weight:400;">ms</div>
<div style="left:8px;top:280.8px;width:54.5px;height:11.7px;background:linear-gradient(#626e79,#4a5560);border:1px solid #3a434c;border-bottom:none"></div>
<div style="left:8px;top:280.8px;width:54.5px;height:11px;font-size:6.7px;line-height:11px;color:#eef1f4;text-align:center">ProtocolAccess</div>
<div style="left:64.5px;top:281px;width:22.5px;height:10.5px;background:linear-gradient(#505b65,#46505a);border:1px solid #3a434c;border-bottom:none"></div>
<div style="left:64.5px;top:281px;width:22.5px;height:10.5px;font-size:6.6px;line-height:10.5px;color:#dfe3e7;text-align:center">SIM</div>
<div style="left:88px;top:281px;width:43px;height:10.5px;background:linear-gradient(#505b65,#46505a);border:1px solid #3a434c;border-bottom:none"></div>
<div style="left:88px;top:281px;width:43px;height:10.5px;font-size:6.6px;line-height:10.5px;color:#dfe3e7;text-align:center">SIM Viewer</div>
<div style="left:7px;top:292px;width:458.5px;height:101.5px;background:#3a4450"></div>
<div class="t" style="left:10.5px;top:293.43px;font-size:6.95px;line-height:8.34px;color:#c4c9ce;font-weight:400;">02.06.21 05:13:23.774 2524/2872 CsaG</div>
<div class="t" style="left:357.5px;top:293.58px;font-size:6.7px;line-height:8.04px;color:#c4c9ce;font-weight:400;">onf&gt;</div>
<div class="t" style="left:10.5px;top:301.73px;font-size:6.95px;line-height:8.34px;color:#c4c9ce;font-weight:400;">2021/06/02-05:13:24.083582</div>
<div class="t" style="left:107px;top:301.73px;font-size:6.95px;line-height:8.34px;color:#c4c9ce;font-weight:400;">Thread-2</div>
<div class="t" style="left:357.5px;top:301.88px;font-size:6.7px;line-height:8.04px;color:#c4c9ce;font-weight:400;">ervice::MriProtAccessService()</div>
<div class="t" style="left:10.5px;top:310.03px;font-size:6.95px;line-height:8.34px;color:#c4c9ce;font-weight:400;">2021/06/02-05:13:24.105247</div>
<div class="t" style="left:107px;top:310.03px;font-size:6.95px;line-height:8.34px;color:#c4c9ce;font-weight:400;">Thread-2</div>
<div class="t" style="left:357.5px;top:310.18px;font-size:6.7px;line-height:8.04px;color:#c4c9ce;font-weight:400;">syngo.MR.Protocol.Business....</div>
<div class="t" style="left:10.5px;top:318.33px;font-size:6.95px;line-height:8.34px;color:#c4c9ce;font-weight:400;">2021/06/02-05:13:24.105247</div>
<div class="t" style="left:107px;top:318.33px;font-size:6.95px;line-height:8.34px;color:#c4c9ce;font-weight:400;">Thread-2</div>
<div class="t" style="left:357.5px;top:318.48px;font-size:6.7px;line-height:8.04px;color:#c4c9ce;font-weight:400;">rotocol.Business.CopyRef.Int...</div>
<div class="t" style="left:10.5px;top:326.63px;font-size:6.95px;line-height:8.34px;color:#c4c9ce;font-weight:400;">CopyRefService started successfully with</div>
<div class="t" style="left:10.5px;top:334.93px;font-size:6.95px;line-height:8.34px;color:#c4c9ce;font-weight:400;">2021/06/02-05:13:24.300232</div>
<div class="t" style="left:107px;top:334.93px;font-size:6.95px;line-height:8.34px;color:#c4c9ce;font-weight:400;">Thread-2</div>
<div class="t" style="left:357.5px;top:335.08px;font-size:6.7px;line-height:8.04px;color:#c4c9ce;font-weight:400;">ri net.tcp://192.168.56.101:...</div>
<div class="t" style="left:10.5px;top:343.23px;font-size:6.95px;line-height:8.34px;color:#c4c9ce;font-weight:400;">Enabled floating point exception handlin</div>
<div class="t" style="left:10.5px;top:351.53px;font-size:6.95px;line-height:8.34px;color:#c4c9ce;font-weight:400;">2021/06/02-05:13:24.365227</div>
<div class="t" style="left:107px;top:351.53px;font-size:6.95px;line-height:8.34px;color:#c4c9ce;font-weight:400;">Thread-2</div>
<div class="t" style="left:10.5px;top:359.83px;font-size:6.95px;line-height:8.34px;color:#c4c9ce;font-weight:400;">2021/06/02-05:13:24.365227</div>
<div class="t" style="left:107px;top:359.83px;font-size:6.95px;line-height:8.34px;color:#c4c9ce;font-weight:400;">Thread-2</div>
<div class="t" style="left:10.5px;top:368.13px;font-size:6.95px;line-height:8.34px;color:#c4c9ce;font-weight:400;">2021/06/02-05:13:24.365227</div>
<div class="t" style="left:107px;top:368.13px;font-size:6.95px;line-height:8.34px;color:#c4c9ce;font-weight:400;">Thread-2</div>
<div class="t" style="left:10.5px;top:376.43px;font-size:6.95px;line-height:8.34px;color:#c4c9ce;font-weight:400;">2021/06/02-05:13:24.365227</div>
<div class="t" style="left:107px;top:376.43px;font-size:6.95px;line-height:8.34px;color:#c4c9ce;font-weight:400;">Thread-2</div>
<div class="t" style="left:10.5px;top:384.73px;font-size:6.95px;line-height:8.34px;color:#c4c9ce;font-weight:400;">2021/06/02-05:13:24.365227</div>
<div class="t" style="left:107px;top:384.73px;font-size:6.95px;line-height:8.34px;color:#c4c9ce;font-weight:400;">Thread-2</div>
<div class="t" style="left:357.5px;top:384.88px;font-size:6.7px;line-height:8.04px;color:#c4c9ce;font-weight:400;">Mutex</div>
<div style="left:455px;top:292.5px;width:8.5px;height:100.5px;background:#3e4853"></div>
<div style="left:455.8px;top:294px;width:7px;height:7.5px;background:#4e5a66;border:1px solid #36404a"></div>
<svg style="left:455.8px;top:294px" width="7" height="7.5" viewBox="0 0 7 7.5"><path d="M1.8 4.8 L3.5 2.6 L5.2 4.8 Z" fill="#e8ecf0"/></svg>
<div style="left:456px;top:302.5px;width:6.5px;height:4px;background:#56626e"></div>
<div style="left:455.8px;top:383.5px;width:7px;height:7.5px;background:#4e5a66;border:1px solid #36404a"></div>
<svg style="left:455.8px;top:383.5px" width="7" height="7.5" viewBox="0 0 7 7.5"><path d="M1.8 3 L3.5 5.2 L5.2 3 Z" fill="#e8ecf0"/></svg>
<div style="left:0px;top:207px;width:1.5px;height:3px;background:#5a8ad0"></div>
<div style="left:0px;top:253px;width:1.5px;height:3px;background:#c0c8d8"></div>
<div style="left:132px;top:141.5px;width:225px;height:319px;background:#1b222a;border:1px solid #5a646e;border-right-color:#20262c;border-bottom-color:#20262c;box-shadow:1px 1px 1.5px rgba(0,0,0,0.45)"></div>
<div class="t" style="left:135.6px;top:144.21px;font-size:6.82px;line-height:8.18px;color:#eef0f2;font-weight:400;">CHECK FLIP ANGLE! : The actual excitation flip angle may be clipped or</div>
<div class="t" style="left:135.6px;top:152.50px;font-size:6.82px;line-height:8.18px;color:#eef0f2;font-weight:400;">is otherwise not equal to the nominal FA.</div>
<div class="t" style="left:135.6px;top:160.80px;font-size:6.82px;line-height:8.18px;color:#eef0f2;font-weight:400;">Check RF duration tooltip!</div>
<div class="t" style="left:135.6px;top:169.09px;font-size:6.82px;line-height:8.18px;color:#eef0f2;font-weight:400;">Possible solutions:</div>
<div class="t" style="left:135.6px;top:177.39px;font-size:6.82px;line-height:8.18px;color:#eef0f2;font-weight:400;"> - reduce nominal FA</div>
<div class="t" style="left:135.6px;top:185.68px;font-size:6.82px;line-height:8.18px;color:#eef0f2;font-weight:400;"> - increase RF duration</div>
<div class="t" style="left:135.6px;top:193.98px;font-size:6.82px;line-height:8.18px;color:#eef0f2;font-weight:400;"> - enable binomial-11 WE (2 times RF with FA/2)</div>
<div class="t" style="left:135.6px;top:202.27px;font-size:6.82px;line-height:8.18px;color:#eef0f2;font-weight:400;"> - switch to fast RF type while keeping duration</div>
<div class="t" style="left:135.6px;top:210.57px;font-size:6.82px;line-height:8.18px;color:#eef0f2;font-weight:400;"> (reduces BWT-product)</div>
<div class="t" style="left:135.6px;top:227.16px;font-size:6.82px;line-height:8.18px;color:#eef0f2;font-weight:400;">NOTE: Siemens 121 water excitation is not checked!</div>
<div class="t" style="left:135.6px;top:243.75px;font-size:6.82px;line-height:8.18px;color:#eef0f2;font-weight:400;">Invert PE : Regular, undersampled EPI</div>
<div class="t" style="left:135.6px;top:252.04px;font-size:6.82px;line-height:8.18px;color:#eef0f2;font-weight:400;">Trajectory:</div>
<div class="t" style="left:190.7px;top:252.04px;font-size:6.82px;line-height:8.18px;color:#eef0f2;font-weight:400;">1.3x1z0</div>
<div class="t" style="left:135.6px;top:260.34px;font-size:6.82px;line-height:8.18px;color:#eef0f2;font-weight:400;">y-blip / z-blips:</div>
<div class="t" style="left:190.7px;top:260.34px;font-size:6.82px;line-height:8.18px;color:#eef0f2;font-weight:400;">3 / [0,0]</div>
<div class="t" style="left:135.6px;top:268.63px;font-size:6.82px;line-height:8.18px;color:#eef0f2;font-weight:400;">z-blip cycle, nS:</div>
<div class="t" style="left:190.7px;top:268.63px;font-size:6.82px;line-height:8.18px;color:#eef0f2;font-weight:400;">1</div>
<div class="t" style="left:135.6px;top:276.93px;font-size:6.82px;line-height:8.18px;color:#eef0f2;font-weight:400;">Stimberg and Stoecker, MRM 2020</div>
<div class="t" style="left:135.6px;top:285.22px;font-size:6.82px;line-height:8.18px;color:#eef0f2;font-weight:400;">DOI: 10.1002/mrm.28486</div>
<div class="t" style="left:135.6px;top:301.81px;font-size:6.82px;line-height:8.18px;color:#eef0f2;font-weight:400;">Shots to meas.</div>
<div class="t" style="left:190.7px;top:301.81px;font-size:6.82px;line-height:8.18px;color:#eef0f2;font-weight:400;">= 8</div>
<div class="t" style="left:135.6px;top:310.11px;font-size:6.82px;line-height:8.18px;color:#eef0f2;font-weight:400;">K-center shot</div>
<div class="t" style="left:190.7px;top:310.11px;font-size:6.82px;line-height:8.18px;color:#eef0f2;font-weight:400;">= 5</div>
<div class="t" style="left:135.6px;top:318.40px;font-size:6.82px;line-height:8.18px;color:#eef0f2;font-weight:400;">2 x Ramp sampl.</div>
<div class="t" style="left:190.7px;top:318.40px;font-size:6.82px;line-height:8.18px;color:#eef0f2;font-weight:400;">= 180 us</div>
<div class="t" style="left:135.6px;top:326.70px;font-size:6.82px;line-height:8.18px;color:#eef0f2;font-weight:400;">RO amplitude</div>
<div class="t" style="left:190.7px;top:326.70px;font-size:6.82px;line-height:8.18px;color:#eef0f2;font-weight:400;">= 21.8 mT/m</div>
<div class="t" style="left:135.6px;top:334.99px;font-size:6.82px;line-height:8.18px;color:#eef0f2;font-weight:400;">Echo Spacing</div>
<div class="t" style="left:190.7px;top:334.99px;font-size:6.82px;line-height:8.18px;color:#eef0f2;font-weight:400;">= 590 us</div>
<div class="t" style="left:135.6px;top:343.29px;font-size:6.82px;line-height:8.18px;color:#eef0f2;font-weight:400;">Eff. Echo Spacing</div>
<div class="t" style="left:190.7px;top:343.29px;font-size:6.82px;line-height:8.18px;color:#eef0f2;font-weight:400;">= 197 us</div>
<div class="t" style="left:135.6px;top:351.58px;font-size:6.82px;line-height:8.18px;color:#eef0f2;font-weight:400;">Eff. Bandw. PE</div>
<div class="t" style="left:190.7px;top:351.58px;font-size:6.82px;line-height:8.18px;color:#eef0f2;font-weight:400;">= 60.5 Hz/px</div>
<div class="t" style="left:135.6px;top:359.88px;font-size:6.82px;line-height:8.18px;color:#eef0f2;font-weight:400;">(~6.7 px fat-water-shift PE)</div>
<div class="t" style="left:135.6px;top:368.17px;font-size:6.82px;line-height:8.18px;color:#eef0f2;font-weight:400;">Total Readout t. (FSL)</div>
<div class="t" style="left:219px;top:368.17px;font-size:6.82px;line-height:8.18px;color:#eef0f2;font-weight:400;">= 16.323 ms</div>
<div class="t" style="left:135.6px;top:376.47px;font-size:6.82px;line-height:8.18px;color:#eef0f2;font-weight:400;">Total Readout t. (SPM)</div>
<div class="t" style="left:219px;top:376.47px;font-size:6.82px;line-height:8.18px;color:#eef0f2;font-weight:400;">= 16.520 ms</div>
<div class="t" style="left:135.6px;top:401.35px;font-size:6.82px;line-height:8.18px;color:#eef0f2;font-weight:400;">---</div>
<div class="t" style="left:135.6px;top:409.65px;font-size:6.82px;line-height:8.18px;color:#eef0f2;font-weight:400;"> Volume TR</div>
<div class="t" style="left:190.7px;top:409.65px;font-size:6.82px;line-height:8.18px;color:#eef0f2;font-weight:400;">= 0.365000 ms</div>
<div class="t" style="left:135.6px;top:417.94px;font-size:6.82px;line-height:8.18px;color:#eef0f2;font-weight:400;">Imaging scans start after 2.189 s!</div>
<div class="t" style="left:135.6px;top:434.53px;font-size:6.82px;line-height:8.18px;color:#eef0f2;font-weight:400;">NORDIC : Last TR is noise scan for g-facro map estimation.</div>
<div class="t" style="left:135.6px;top:442.83px;font-size:6.82px;line-height:8.18px;color:#eef0f2;font-weight:400;"> This only fors with variable flip angles.</div>
<div class="t" style="left:135.6px;top:451.12px;font-size:6.82px;line-height:8.18px;color:#eef0f2;font-weight:400;"> If you want constant FAs, use varflip=1.</div>
<svg style="left:0;top:0" width="1023" height="555" viewBox="0 0 1023 555"><polygon points="166.1,131.7 190,119.3 190,128.6 228.2,127.6 228.2,132.5 190,134 190,142.7" fill="#22ee00"/><polygon points="274.5,450.5 297,439 297,447 336,446.4 336,451.3 297,452.5 297,461.5" fill="#22ee00"/><polygon points="809.5,302.7 818.1,277.8 823.8,283.4 849.8,262.4 853.5,266.5 827.8,287.3 835.4,295.2" fill="#22ee00"/><polygon points="878.6,302.7 887.2,277.8 892.9,283.4 918.9,262.4 922.6,266.5 896.9,287.3 904.5,295.2" fill="#22ee00"/></svg></body></html>
